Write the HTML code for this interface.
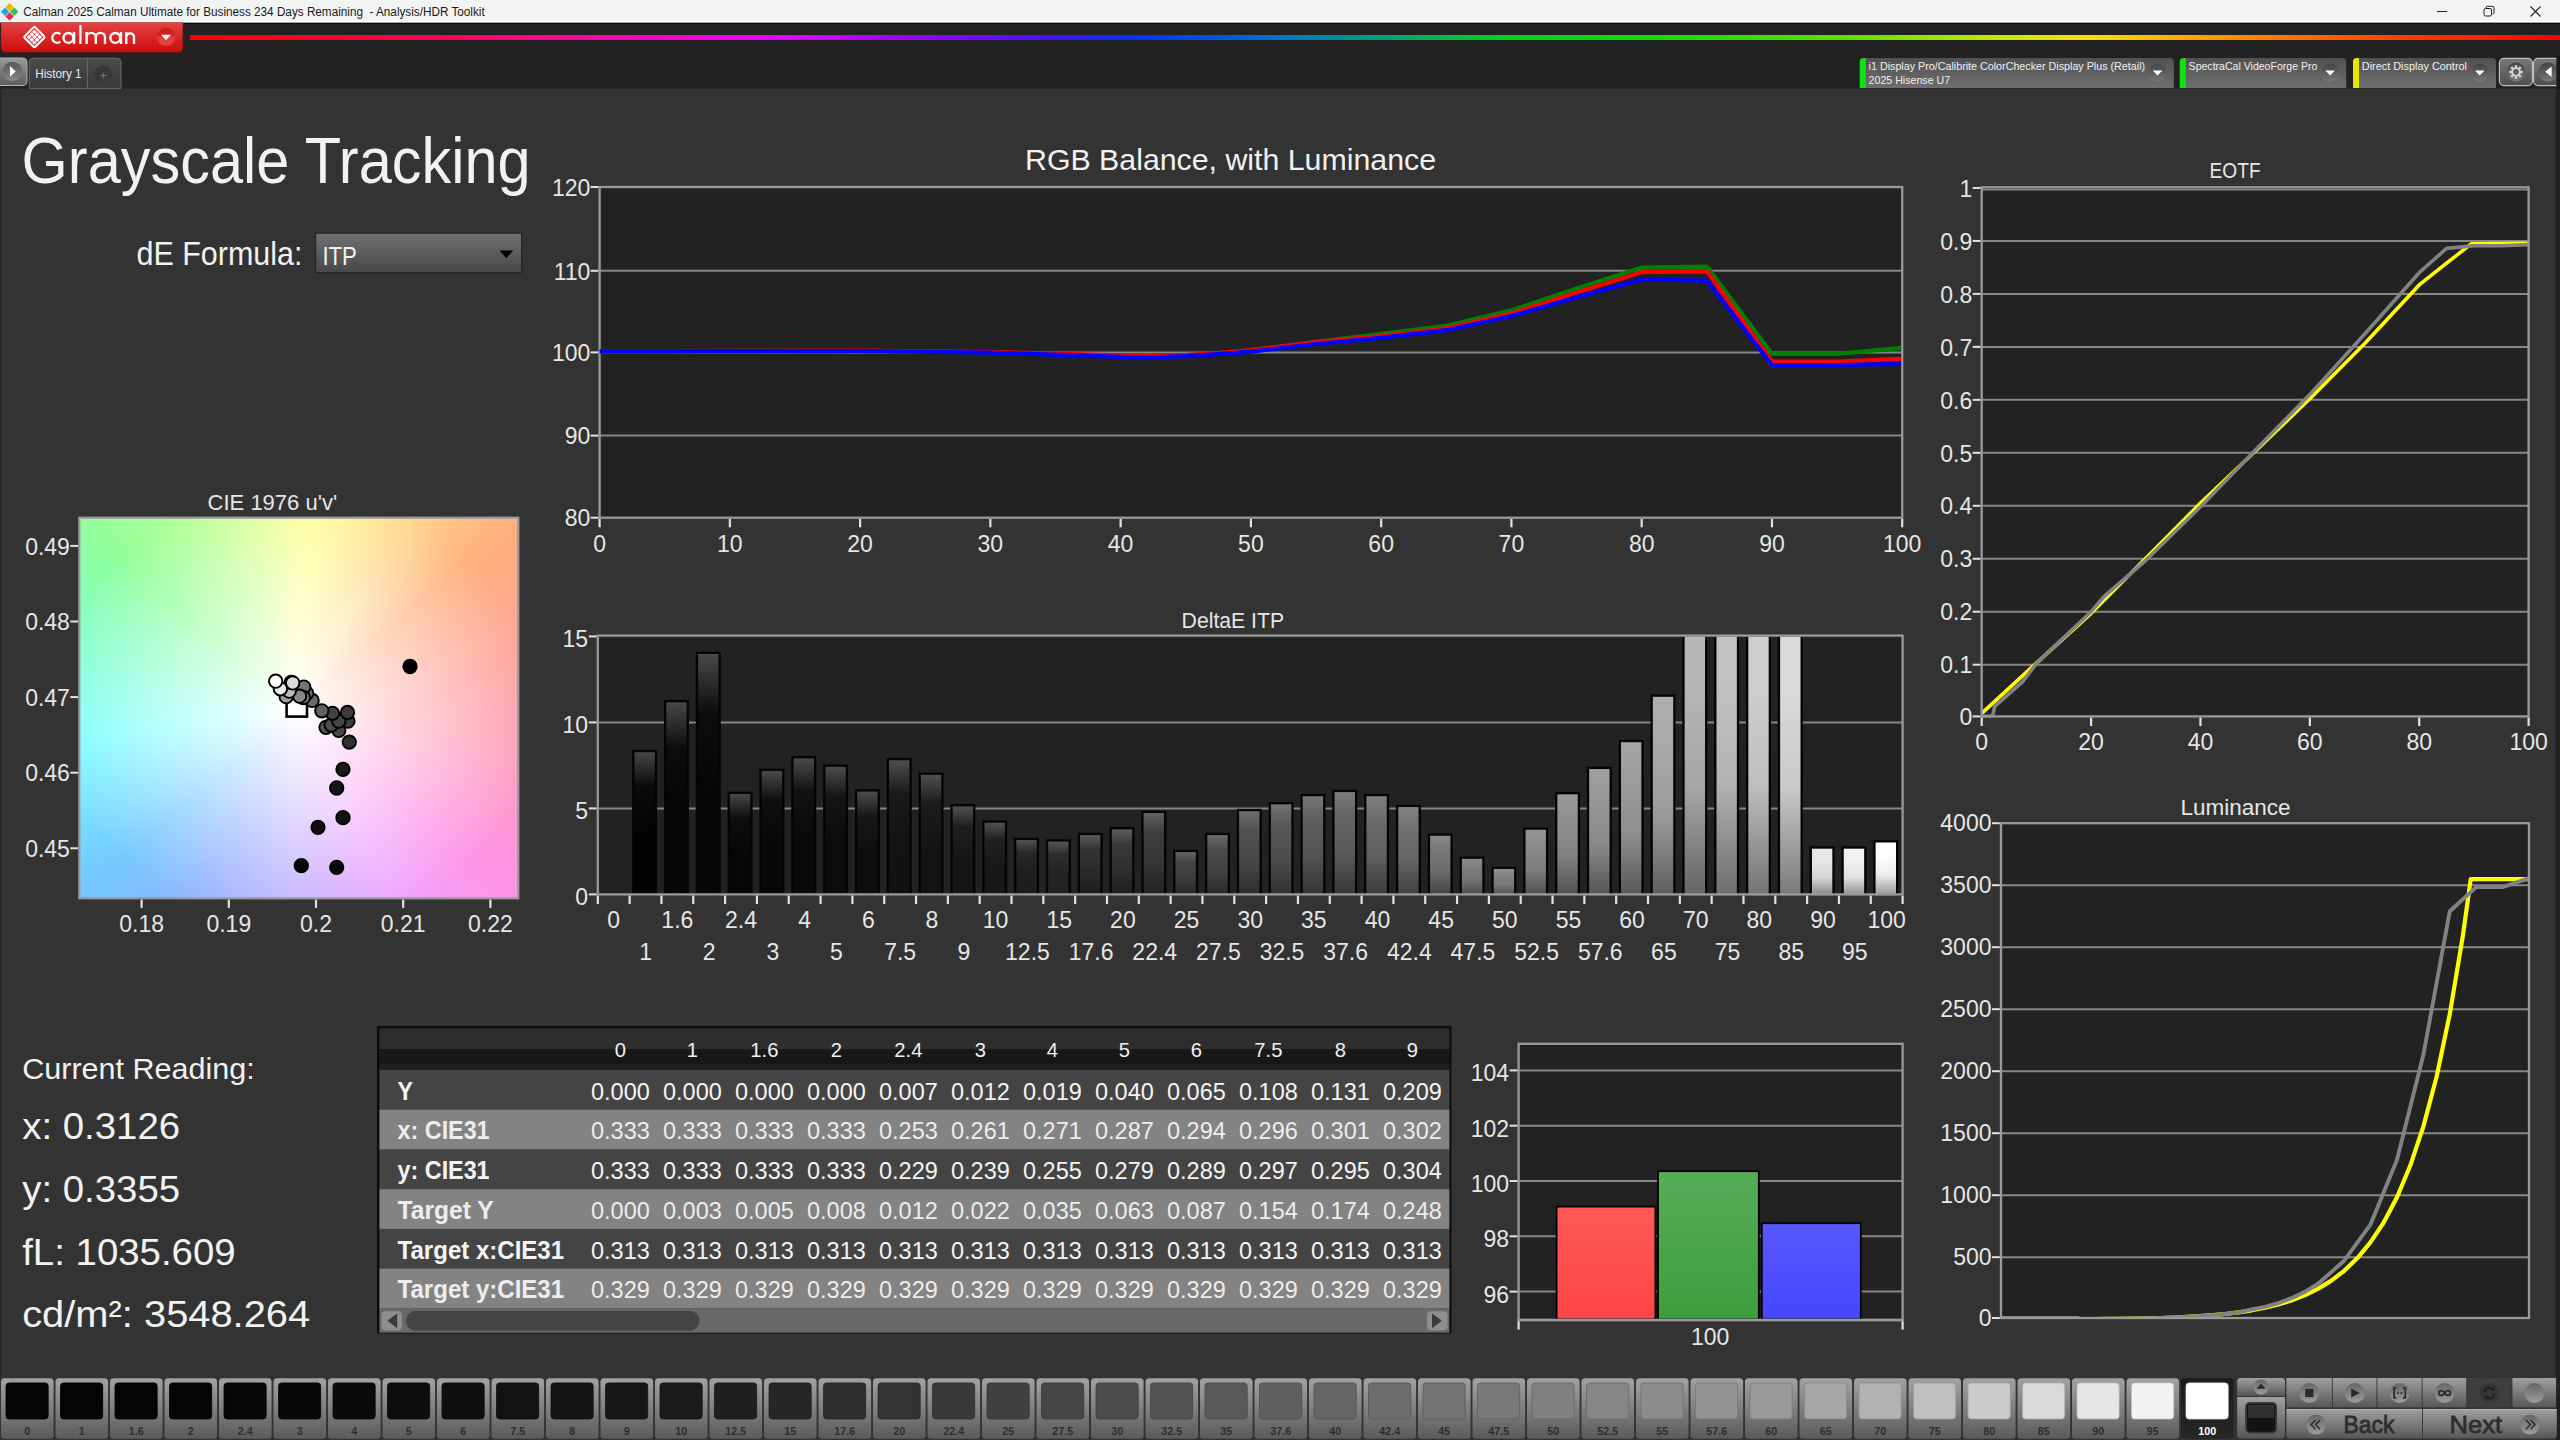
<!DOCTYPE html>
<html><head><meta charset="utf-8"><title>Calman</title>
<style>
html,body{margin:0;padding:0;background:#333;overflow:hidden}
body{width:2560px;height:1440px;position:relative;font-family:"Liberation Sans",sans-serif}
svg{position:absolute;left:0;top:0}
svg text{font-family:"Liberation Sans",sans-serif}
</style></head><body>
<svg width="2560" height="1440" viewBox="0 0 2560 1440">
<defs>
<linearGradient id="gTB" x1="0" y1="0" x2="1" y2="0"><stop offset="0" stop-color="#edf3f1"/><stop offset="0.08" stop-color="#f2f3f3"/><stop offset="1" stop-color="#f3f3f3"/></linearGradient>
<linearGradient id="gRed" x1="0" y1="0" x2="0" y2="1"><stop offset="0" stop-color="#e24444"/><stop offset="0.5" stop-color="#d92626"/><stop offset="1" stop-color="#cb0e0e"/></linearGradient>
<linearGradient id="gRedC" x1="0" y1="0" x2="0" y2="1"><stop offset="0" stop-color="#cf1818"/><stop offset="0.45" stop-color="#d62020"/><stop offset="0.5" stop-color="#e03c3c"/><stop offset="1" stop-color="#e34a4a"/></linearGradient>
<linearGradient id="gRb" x1="0" y1="0" x2="1" y2="0"><stop offset="0" stop-color="#ff0000"/><stop offset="0.10" stop-color="#ff0050"/><stop offset="0.19" stop-color="#ff00c0"/><stop offset="0.24" stop-color="#f000ff"/><stop offset="0.30" stop-color="#a000ff"/><stop offset="0.36" stop-color="#4a10ff"/><stop offset="0.40" stop-color="#0030ff"/><stop offset="0.455" stop-color="#0070d0"/><stop offset="0.50" stop-color="#00a080"/><stop offset="0.55" stop-color="#00d020"/><stop offset="0.62" stop-color="#10e000"/><stop offset="0.70" stop-color="#60e000"/><stop offset="0.76" stop-color="#c0e800"/><stop offset="0.80" stop-color="#f8e000"/><stop offset="0.86" stop-color="#ff9000"/><stop offset="0.93" stop-color="#ff4000"/><stop offset="1" stop-color="#ff0000"/></linearGradient>
<linearGradient id="gBtn" x1="0" y1="0" x2="0" y2="1"><stop offset="0" stop-color="#9a9a9a"/><stop offset="1" stop-color="#5c5c5c"/></linearGradient>
<linearGradient id="gBtnC" x1="0" y1="0" x2="0" y2="1"><stop offset="0" stop-color="#555"/><stop offset="1" stop-color="#8a8a8a"/></linearGradient>
<linearGradient id="gTab" x1="0" y1="0" x2="0" y2="1"><stop offset="0" stop-color="#4c4c4c"/><stop offset="1" stop-color="#383838"/></linearGradient>
<linearGradient id="gDev" x1="0" y1="0" x2="0" y2="1"><stop offset="0" stop-color="#515151"/><stop offset="1" stop-color="#6e6e6e"/></linearGradient>
<linearGradient id="gDevC" x1="0" y1="0" x2="0" y2="1"><stop offset="0" stop-color="#444"/><stop offset="1" stop-color="#777"/></linearGradient>
<linearGradient id="gGear" x1="0" y1="0" x2="0" y2="1"><stop offset="0" stop-color="#7a7a7a"/><stop offset="1" stop-color="#4e4e4e"/></linearGradient>
<linearGradient id="gDD" x1="0" y1="0" x2="0" y2="1"><stop offset="0" stop-color="#707070"/><stop offset="1" stop-color="#484848"/></linearGradient>
<linearGradient id="gb1" x1="0" y1="0" x2="0" y2="1"><stop offset="0" stop-color="#494949"/><stop offset="0.24" stop-color="#0a0a0a"/><stop offset="0.6" stop-color="#020202"/><stop offset="1" stop-color="#020202"/></linearGradient>
<linearGradient id="gb2" x1="0" y1="0" x2="0" y2="1"><stop offset="0" stop-color="#4a4a4a"/><stop offset="0.24" stop-color="#0c0c0c"/><stop offset="0.6" stop-color="#040404"/><stop offset="1" stop-color="#040404"/></linearGradient>
<linearGradient id="gb3" x1="0" y1="0" x2="0" y2="1"><stop offset="0" stop-color="#4a4a4a"/><stop offset="0.24" stop-color="#0d0d0d"/><stop offset="0.6" stop-color="#050505"/><stop offset="1" stop-color="#050505"/></linearGradient>
<linearGradient id="gb4" x1="0" y1="0" x2="0" y2="1"><stop offset="0" stop-color="#4b4b4b"/><stop offset="0.24" stop-color="#0e0e0e"/><stop offset="0.6" stop-color="#060606"/><stop offset="1" stop-color="#060606"/></linearGradient>
<linearGradient id="gb5" x1="0" y1="0" x2="0" y2="1"><stop offset="0" stop-color="#4b4b4b"/><stop offset="0.24" stop-color="#0f0f0f"/><stop offset="0.6" stop-color="#070707"/><stop offset="1" stop-color="#070707"/></linearGradient>
<linearGradient id="gb6" x1="0" y1="0" x2="0" y2="1"><stop offset="0" stop-color="#4d4d4d"/><stop offset="0.24" stop-color="#121212"/><stop offset="0.6" stop-color="#090909"/><stop offset="1" stop-color="#090909"/></linearGradient>
<linearGradient id="gb7" x1="0" y1="0" x2="0" y2="1"><stop offset="0" stop-color="#4e4e4e"/><stop offset="0.24" stop-color="#141414"/><stop offset="0.6" stop-color="#0c0c0c"/><stop offset="1" stop-color="#0b0b0b"/></linearGradient>
<linearGradient id="gb8" x1="0" y1="0" x2="0" y2="1"><stop offset="0" stop-color="#4f4f4f"/><stop offset="0.24" stop-color="#171717"/><stop offset="0.6" stop-color="#0e0e0e"/><stop offset="1" stop-color="#0e0e0e"/></linearGradient>
<linearGradient id="gb9" x1="0" y1="0" x2="0" y2="1"><stop offset="0" stop-color="#515151"/><stop offset="0.24" stop-color="#1b1b1b"/><stop offset="0.6" stop-color="#121212"/><stop offset="1" stop-color="#111111"/></linearGradient>
<linearGradient id="gb10" x1="0" y1="0" x2="0" y2="1"><stop offset="0" stop-color="#515151"/><stop offset="0.24" stop-color="#1c1c1c"/><stop offset="0.6" stop-color="#131313"/><stop offset="1" stop-color="#121212"/></linearGradient>
<linearGradient id="gb11" x1="0" y1="0" x2="0" y2="1"><stop offset="0" stop-color="#535353"/><stop offset="0.24" stop-color="#1e1e1e"/><stop offset="0.6" stop-color="#151515"/><stop offset="1" stop-color="#151515"/></linearGradient>
<linearGradient id="gb12" x1="0" y1="0" x2="0" y2="1"><stop offset="0" stop-color="#545454"/><stop offset="0.24" stop-color="#212121"/><stop offset="0.6" stop-color="#181818"/><stop offset="1" stop-color="#171717"/></linearGradient>
<linearGradient id="gb13" x1="0" y1="0" x2="0" y2="1"><stop offset="0" stop-color="#575757"/><stop offset="0.24" stop-color="#272727"/><stop offset="0.6" stop-color="#1e1e1e"/><stop offset="1" stop-color="#1d1d1d"/></linearGradient>
<linearGradient id="gb14" x1="0" y1="0" x2="0" y2="1"><stop offset="0" stop-color="#5a5a5a"/><stop offset="0.24" stop-color="#2d2d2d"/><stop offset="0.6" stop-color="#242424"/><stop offset="1" stop-color="#222222"/></linearGradient>
<linearGradient id="gb15" x1="0" y1="0" x2="0" y2="1"><stop offset="0" stop-color="#5e5e5e"/><stop offset="0.24" stop-color="#333333"/><stop offset="0.6" stop-color="#2a2a2a"/><stop offset="1" stop-color="#191919"/></linearGradient>
<linearGradient id="gb16" x1="0" y1="0" x2="0" y2="1"><stop offset="0" stop-color="#616161"/><stop offset="0.24" stop-color="#393939"/><stop offset="0.6" stop-color="#2f2f2f"/><stop offset="1" stop-color="#1d1d1d"/></linearGradient>
<linearGradient id="gb17" x1="0" y1="0" x2="0" y2="1"><stop offset="0" stop-color="#646464"/><stop offset="0.24" stop-color="#3f3f3f"/><stop offset="0.6" stop-color="#353535"/><stop offset="1" stop-color="#202020"/></linearGradient>
<linearGradient id="gb18" x1="0" y1="0" x2="0" y2="1"><stop offset="0" stop-color="#686868"/><stop offset="0.24" stop-color="#464646"/><stop offset="0.6" stop-color="#3b3b3b"/><stop offset="1" stop-color="#242424"/></linearGradient>
<linearGradient id="gb19" x1="0" y1="0" x2="0" y2="1"><stop offset="0" stop-color="#6c6c6c"/><stop offset="0.24" stop-color="#4c4c4c"/><stop offset="0.6" stop-color="#414141"/><stop offset="1" stop-color="#272727"/></linearGradient>
<linearGradient id="gb20" x1="0" y1="0" x2="0" y2="1"><stop offset="0" stop-color="#707070"/><stop offset="0.24" stop-color="#525252"/><stop offset="0.6" stop-color="#474747"/><stop offset="1" stop-color="#2b2b2b"/></linearGradient>
<linearGradient id="gb21" x1="0" y1="0" x2="0" y2="1"><stop offset="0" stop-color="#747474"/><stop offset="0.24" stop-color="#585858"/><stop offset="0.6" stop-color="#4d4d4d"/><stop offset="1" stop-color="#2e2e2e"/></linearGradient>
<linearGradient id="gb22" x1="0" y1="0" x2="0" y2="1"><stop offset="0" stop-color="#787878"/><stop offset="0.24" stop-color="#5e5e5e"/><stop offset="0.6" stop-color="#535353"/><stop offset="1" stop-color="#323232"/></linearGradient>
<linearGradient id="gb23" x1="0" y1="0" x2="0" y2="1"><stop offset="0" stop-color="#7c7c7c"/><stop offset="0.24" stop-color="#656565"/><stop offset="0.6" stop-color="#595959"/><stop offset="1" stop-color="#363636"/></linearGradient>
<linearGradient id="gb24" x1="0" y1="0" x2="0" y2="1"><stop offset="0" stop-color="#808080"/><stop offset="0.24" stop-color="#6b6b6b"/><stop offset="0.6" stop-color="#5f5f5f"/><stop offset="1" stop-color="#393939"/></linearGradient>
<linearGradient id="gb25" x1="0" y1="0" x2="0" y2="1"><stop offset="0" stop-color="#848484"/><stop offset="0.24" stop-color="#717171"/><stop offset="0.6" stop-color="#656565"/><stop offset="1" stop-color="#3d3d3d"/></linearGradient>
<linearGradient id="gb26" x1="0" y1="0" x2="0" y2="1"><stop offset="0" stop-color="#898989"/><stop offset="0.24" stop-color="#777777"/><stop offset="0.6" stop-color="#6b6b6b"/><stop offset="1" stop-color="#404040"/></linearGradient>
<linearGradient id="gb27" x1="0" y1="0" x2="0" y2="1"><stop offset="0" stop-color="#8d8d8d"/><stop offset="0.24" stop-color="#7d7d7d"/><stop offset="0.6" stop-color="#717171"/><stop offset="1" stop-color="#444444"/></linearGradient>
<linearGradient id="gb28" x1="0" y1="0" x2="0" y2="1"><stop offset="0" stop-color="#929292"/><stop offset="0.24" stop-color="#848484"/><stop offset="0.6" stop-color="#777777"/><stop offset="1" stop-color="#474747"/></linearGradient>
<linearGradient id="gb29" x1="0" y1="0" x2="0" y2="1"><stop offset="0" stop-color="#969696"/><stop offset="0.24" stop-color="#8a8a8a"/><stop offset="0.6" stop-color="#7d7d7d"/><stop offset="1" stop-color="#4b4b4b"/></linearGradient>
<linearGradient id="gb30" x1="0" y1="0" x2="0" y2="1"><stop offset="0" stop-color="#9b9b9b"/><stop offset="0.24" stop-color="#909090"/><stop offset="0.6" stop-color="#828282"/><stop offset="1" stop-color="#4f4f4f"/></linearGradient>
<linearGradient id="gb31" x1="0" y1="0" x2="0" y2="1"><stop offset="0" stop-color="#a0a0a0"/><stop offset="0.24" stop-color="#969696"/><stop offset="0.6" stop-color="#898989"/><stop offset="1" stop-color="#525252"/></linearGradient>
<linearGradient id="gb32" x1="0" y1="0" x2="0" y2="1"><stop offset="0" stop-color="#a5a5a5"/><stop offset="0.24" stop-color="#9c9c9c"/><stop offset="0.6" stop-color="#8e8e8e"/><stop offset="1" stop-color="#565656"/></linearGradient>
<linearGradient id="gb33" x1="0" y1="0" x2="0" y2="1"><stop offset="0" stop-color="#afafaf"/><stop offset="0.24" stop-color="#a9a9a9"/><stop offset="0.6" stop-color="#9a9a9a"/><stop offset="1" stop-color="#5d5d5d"/></linearGradient>
<linearGradient id="gb34" x1="0" y1="0" x2="0" y2="1"><stop offset="0" stop-color="#b9b9b9"/><stop offset="0.24" stop-color="#b5b5b5"/><stop offset="0.6" stop-color="#a6a6a6"/><stop offset="1" stop-color="#646464"/></linearGradient>
<linearGradient id="gb35" x1="0" y1="0" x2="0" y2="1"><stop offset="0" stop-color="#c4c4c4"/><stop offset="0.24" stop-color="#c1c1c1"/><stop offset="0.6" stop-color="#b2b2b2"/><stop offset="1" stop-color="#6b6b6b"/></linearGradient>
<linearGradient id="gb36" x1="0" y1="0" x2="0" y2="1"><stop offset="0" stop-color="#cfcfcf"/><stop offset="0.24" stop-color="#cecece"/><stop offset="0.6" stop-color="#bebebe"/><stop offset="1" stop-color="#727272"/></linearGradient>
<linearGradient id="gb37" x1="0" y1="0" x2="0" y2="1"><stop offset="0" stop-color="#dadada"/><stop offset="0.24" stop-color="#dadada"/><stop offset="0.6" stop-color="#cacaca"/><stop offset="1" stop-color="#797979"/></linearGradient>
<linearGradient id="gb38" x1="0" y1="0" x2="0" y2="1"><stop offset="0" stop-color="#e6e6e6"/><stop offset="0.24" stop-color="#e6e6e6"/><stop offset="0.6" stop-color="#d5d5d5"/><stop offset="1" stop-color="#818181"/></linearGradient>
<linearGradient id="gb39" x1="0" y1="0" x2="0" y2="1"><stop offset="0" stop-color="#f2f2f2"/><stop offset="0.24" stop-color="#f3f3f3"/><stop offset="0.6" stop-color="#e1e1e1"/><stop offset="1" stop-color="#888888"/></linearGradient>
<linearGradient id="gb40" x1="0" y1="0" x2="0" y2="1"><stop offset="0" stop-color="#ffffff"/><stop offset="0.24" stop-color="#ffffff"/><stop offset="0.6" stop-color="#ededed"/><stop offset="1" stop-color="#8f8f8f"/></linearGradient>
<linearGradient id="gB0" x1="0" y1="0" x2="0" y2="1"><stop offset="0" stop-color="#ff5858"/><stop offset="1" stop-color="#ff4646"/></linearGradient>
<linearGradient id="gB1" x1="0" y1="0" x2="0" y2="1"><stop offset="0" stop-color="#58ac58"/><stop offset="1" stop-color="#3c9e3c"/></linearGradient>
<linearGradient id="gB2" x1="0" y1="0" x2="0" y2="1"><stop offset="0" stop-color="#5858ff"/><stop offset="1" stop-color="#4646ff"/></linearGradient>
<linearGradient id="gTH" x1="0" y1="0" x2="0" y2="1"><stop offset="0" stop-color="#2c2c2c"/><stop offset="0.5" stop-color="#2e2e2e"/><stop offset="0.5" stop-color="#191919"/><stop offset="0.86" stop-color="#161616"/><stop offset="0.86" stop-color="#202020"/><stop offset="1" stop-color="#202020"/></linearGradient>
<linearGradient id="gTile" x1="0" y1="0" x2="0" y2="1"><stop offset="0" stop-color="#a2a2a2"/><stop offset="0.55" stop-color="#7c7c7c"/><stop offset="1" stop-color="#5a5a5a"/></linearGradient>
<linearGradient id="gTileS" x1="0" y1="0" x2="0" y2="1"><stop offset="0" stop-color="#1c1c1c"/><stop offset="1" stop-color="#262626"/></linearGradient>
<linearGradient id="gCt" x1="0" y1="0" x2="0" y2="1"><stop offset="0" stop-color="#a0a0a0"/><stop offset="1" stop-color="#565656"/></linearGradient>
<linearGradient id="gCtC" x1="0" y1="0" x2="0" y2="1"><stop offset="0" stop-color="#666"/><stop offset="1" stop-color="#9c9c9c"/></linearGradient>
</defs>
<rect x="0.00" y="0.00" width="2560.00" height="1440.00" fill="#333333" />
<rect x="0.00" y="0.00" width="2560.00" height="22.80" fill="url(#gTB)" />
<rect x="0.00" y="20.70" width="2560.00" height="2.10" fill="#ffffff" />
<rect x="0.00" y="22.80" width="2560.00" height="65.80" fill="#222222" />
<rect x="184.00" y="22.80" width="2376.00" height="1.20" fill="#0c0c0c" />
<rect x="0.00" y="88.60" width="1.20" height="1290.00" fill="#262626" />
<g transform="translate(9.6,11.6)"><path d="M0,-8.6 L4.2,-4.4 L0,-0.2 L-4.2,-4.4Z" fill="#f5b800"/><path d="M-4.6,-4 L-0.4,0.2 L-4.6,4.4 L-8.8,0.2Z" fill="#22a7f0"/><path d="M4.6,-4 L8.8,0.2 L4.6,4.4 L0.4,0.2Z" fill="#3cc13c"/><path d="M0,0.6 L4.2,4.8 L0,9 L-4.2,4.8Z" fill="#ee2255"/></g>
<text x="23.20" y="15.60" font-size="12.00" fill="#1a1a1a" textLength="461.50" lengthAdjust="spacingAndGlyphs" >Calman 2025 Calman Ultimate for Business 234 Days Remaining  - Analysis/HDR Toolkit</text>
<line x1="2437.00" y1="11.50" x2="2447.00" y2="11.50" stroke="#222" stroke-width="1" />
<rect x="2484" y="8.5" width="7.5" height="7.5" rx="1.5" fill="none" stroke="#222" stroke-width="1"/>
<path d="M2486,8.5 V7.8 Q2486,6.3 2487.5,6.3 H2492.3 Q2494,6.3 2494,8 V12.8 Q2494,14 2492.5,14" fill="none" stroke="#222" stroke-width="1"/>
<path d="M2530.5,6.5 L2540.5,16.5 M2540.5,6.5 L2530.5,16.5" stroke="#222" stroke-width="1.1" fill="none"/>
<path d="M0.6,22.6 H183.4 V48 Q183.4,53 178.4,53 H5.6 Q0.6,53 0.6,48 Z" fill="#5a1a14"/>
<path d="M1.2,22.6 H182.6 V47.4 Q182.6,52 178,52 H5.8 Q1.2,52 1.2,47.4 Z" fill="url(#gRed)"/>
<g transform="translate(34.4,37.1) rotate(45)" fill="none" stroke="#fff" stroke-width="2.1"><rect x="-7.5" y="-7.5" width="15" height="15" rx="1.6"/></g>
<g transform="translate(34.4,37.1) rotate(45)" fill="#fff"><rect x="-5.45" y="-5.45" width="3.3" height="3.3" rx="0.7"/><rect x="-5.45" y="-1.65" width="3.3" height="3.3" rx="0.7"/><rect x="-5.45" y="2.15" width="3.3" height="3.3" rx="0.7"/><rect x="-1.65" y="-5.45" width="3.3" height="3.3" rx="0.7"/><rect x="-1.65" y="-1.65" width="3.3" height="3.3" rx="0.7"/><rect x="-1.65" y="2.15" width="3.3" height="3.3" rx="0.7"/><rect x="2.15" y="-5.45" width="3.3" height="3.3" rx="0.7"/><rect x="2.15" y="-1.65" width="3.3" height="3.3" rx="0.7"/><rect x="2.15" y="2.15" width="3.3" height="3.3" rx="0.7"/></g>
<g fill="none" stroke="#fff" stroke-width="2.35" stroke-linecap="butt"><path d="M60.3,34.1 A4.9,4.9 0 1 0 60.3,41.7"/><circle cx="68.4" cy="37.9" r="4.9"/><path d="M74.1,31.9 V43.9"/><path d="M80.4,25 V43.9"/><path d="M86.6,43.9 V31.9 M86.6,37.4 A4.6,4.6 0 0 1 95.8,37.4 V43.9 M95.8,37.4 A4.6,4.6 0 0 1 105,37.4 V43.9"/><circle cx="115.3" cy="37.9" r="4.9"/><path d="M121,31.9 V43.9"/><path d="M126.2,43.9 V31.9 M126.2,37.2 A3.9,3.9 0 0 1 134,37.2 V43.9"/></g>
<circle cx="166" cy="36.8" r="9" fill="url(#gRedC)"/>
<path d="M161,34.8 H171 L166,40Z" fill="#fff"/>
<rect x="189.80" y="35.00" width="2371.00" height="5.00" fill="url(#gRb)" />
<path d="M-2,58 H22.5 Q27,58 27,62.5 V81 Q27,85.5 22.5,85.5 H-2Z" fill="url(#gBtn)" stroke="#b4b4b4" stroke-width="1"/>
<circle cx="12.4" cy="71.4" r="9.6" fill="url(#gBtnC)"/>
<path d="M10,66 L15.6,71.4 L10,76.8Z" fill="#fff"/>
<path d="M29.3,88.4 V62 Q29.3,58.2 33,58.2 H117.2 Q121,58.2 121,62 V88.4Z" fill="url(#gTab)" stroke="#6a6a6a" stroke-width="1"/>
<line x1="87.40" y1="59.00" x2="87.40" y2="88.00" stroke="#6a6a6a" stroke-width="1" />
<text x="35.20" y="78.40" font-size="12.20" fill="#e8e8e8" textLength="46.40" lengthAdjust="spacingAndGlyphs" >History 1</text>
<circle cx="103.2" cy="74.2" r="9" fill="#383838"/>
<path d="M100.2,75.5 H106.2 M103.2,72.5 V78.5" stroke="#7c7c7c" stroke-width="1" fill="none"/>
<path d="M1859.8,88 V62 Q1859.8,58 1863.8,58 H2169.8 Q2173.8,58 2173.8,62 V88Z" fill="url(#gDev)"/>
<path d="M1859.8,88 V62 Q1859.8,58 1863.8,58 H1865.8 V88Z" fill="#12e212"/>
<circle cx="2157.6" cy="72.8" r="9.2" fill="url(#gDevC)"/>
<path d="M2152.8,70.6 H2162.4 L2157.6,75.6Z" fill="#fff"/>
<text x="1868.60" y="69.80" font-size="11.30" fill="#f0f0f0" textLength="276.50" lengthAdjust="spacingAndGlyphs" >i1 Display Pro/Calibrite ColorChecker Display Plus (Retail)</text>
<text x="1868.60" y="84.20" font-size="11.30" fill="#f0f0f0" textLength="81.50" lengthAdjust="spacingAndGlyphs" >2025 Hisense U7</text>
<path d="M2179.8,88 V62 Q2179.8,58 2183.8,58 H2342.2 Q2346.2,58 2346.2,62 V88Z" fill="url(#gDev)"/>
<path d="M2179.8,88 V62 Q2179.8,58 2183.8,58 H2185.8 V88Z" fill="#12e212"/>
<circle cx="2330.2" cy="72.8" r="9.2" fill="url(#gDevC)"/>
<path d="M2325.4,70.6 H2335.0 L2330.2,75.6Z" fill="#fff"/>
<text x="2188.60" y="69.80" font-size="11.30" fill="#f0f0f0" textLength="128.80" lengthAdjust="spacingAndGlyphs" >SpectraCal VideoForge Pro</text>
<path d="M2353.0,88 V62 Q2353.0,58 2357.0,58 H2492.0 Q2496.0,58 2496.0,62 V88Z" fill="url(#gDev)"/>
<path d="M2353.0,88 V62 Q2353.0,58 2357.0,58 H2359.0 V88Z" fill="#e6e600"/>
<circle cx="2479.7" cy="72.8" r="9.2" fill="url(#gDevC)"/>
<path d="M2474.9,70.6 H2484.5 L2479.7,75.6Z" fill="#fff"/>
<text x="2361.80" y="69.80" font-size="11.30" fill="#f0f0f0" textLength="105.20" lengthAdjust="spacingAndGlyphs" >Direct Display Control</text>
<rect x="2499.4" y="58.4" width="33" height="27.2" rx="4.5" fill="url(#gGear)" stroke="#bcbcbc" stroke-width="1.2"/>
<rect x="2533.6" y="58.4" width="33" height="27.2" rx="4.5" fill="url(#gGear)" stroke="#bcbcbc" stroke-width="1.2"/>
<circle cx="2516" cy="72" r="9.4" fill="url(#gDevC)"/>
<circle cx="2548" cy="72" r="9.4" fill="url(#gDevC)"/>
<g transform="translate(2516,72)"><rect x="-1.3" y="-6.8" width="2.6" height="3" fill="#d2d2d2" transform="rotate(0)"/><rect x="-1.3" y="-6.8" width="2.6" height="3" fill="#d2d2d2" transform="rotate(45)"/><rect x="-1.3" y="-6.8" width="2.6" height="3" fill="#d2d2d2" transform="rotate(90)"/><rect x="-1.3" y="-6.8" width="2.6" height="3" fill="#d2d2d2" transform="rotate(135)"/><rect x="-1.3" y="-6.8" width="2.6" height="3" fill="#d2d2d2" transform="rotate(180)"/><rect x="-1.3" y="-6.8" width="2.6" height="3" fill="#d2d2d2" transform="rotate(225)"/><rect x="-1.3" y="-6.8" width="2.6" height="3" fill="#d2d2d2" transform="rotate(270)"/><rect x="-1.3" y="-6.8" width="2.6" height="3" fill="#d2d2d2" transform="rotate(315)"/><circle r="3.8" fill="none" stroke="#d2d2d2" stroke-width="1.8"/></g>
<path d="M2551.6,66.6 L2545.2,71.8 L2551.6,77Z" fill="#fff"/>
<rect x="2556.40" y="56.00" width="3.60" height="33.00" fill="#1a1a1a" />
<rect x="2555.80" y="88.60" width="4.20" height="1352.00" fill="#202020" />
<text x="21.60" y="182.50" font-size="65.40" fill="#f2f2f2" textLength="509.00" lengthAdjust="spacingAndGlyphs" >Grayscale Tracking</text>
<text x="136.50" y="264.60" font-size="32.70" fill="#f2f2f2" textLength="166.00" lengthAdjust="spacingAndGlyphs" >dE Formula:</text>
<rect x="315.6" y="233.2" width="206" height="39.4" fill="url(#gDD)" stroke="#262626" stroke-width="1.2"/>
<text x="322.40" y="265.10" font-size="26.00" fill="#f2f2f2" textLength="34.50" lengthAdjust="spacingAndGlyphs" >ITP</text>
<path d="M499.6,250.4 H513.2 L506.4,258.2Z" fill="#000"/>
<text x="1025.00" y="170.00" font-size="29.00" fill="#f2f2f2" textLength="411.00" lengthAdjust="spacingAndGlyphs" >RGB Balance, with Luminance</text>
<rect x="599.60" y="187.00" width="1302.60" height="330.70" fill="#222222" />
<line x1="599.60" y1="435.60" x2="1902.20" y2="435.60" stroke="#868686" stroke-width="2" />
<line x1="599.60" y1="352.40" x2="1902.20" y2="352.40" stroke="#868686" stroke-width="2" />
<line x1="599.60" y1="270.80" x2="1902.20" y2="270.80" stroke="#868686" stroke-width="2" />
<rect x="599.60" y="187.00" width="1302.60" height="330.70" fill="none" stroke="#9a9a9a" stroke-width="2.3"/>
<line x1="590.60" y1="517.70" x2="598.40" y2="517.70" stroke="#e2e2e2" stroke-width="2" />
<text x="590.30" y="526.40" font-size="23.00" fill="#e6e6e6" text-anchor="end" >80</text>
<line x1="590.60" y1="435.60" x2="598.40" y2="435.60" stroke="#e2e2e2" stroke-width="2" />
<text x="590.30" y="444.30" font-size="23.00" fill="#e6e6e6" text-anchor="end" >90</text>
<line x1="590.60" y1="352.40" x2="598.40" y2="352.40" stroke="#e2e2e2" stroke-width="2" />
<text x="590.30" y="361.10" font-size="23.00" fill="#e6e6e6" text-anchor="end" >100</text>
<line x1="590.60" y1="270.80" x2="598.40" y2="270.80" stroke="#e2e2e2" stroke-width="2" />
<text x="590.30" y="279.50" font-size="23.00" fill="#e6e6e6" text-anchor="end" >110</text>
<line x1="590.60" y1="187.00" x2="598.40" y2="187.00" stroke="#e2e2e2" stroke-width="2" />
<text x="590.30" y="195.70" font-size="23.00" fill="#e6e6e6" text-anchor="end" >120</text>
<line x1="599.60" y1="518.90" x2="599.60" y2="527.30" stroke="#e2e2e2" stroke-width="2.2" />
<text x="599.60" y="551.80" font-size="23.00" fill="#e6e6e6" text-anchor="middle" >0</text>
<line x1="729.86" y1="518.90" x2="729.86" y2="527.30" stroke="#e2e2e2" stroke-width="2.2" />
<text x="729.86" y="551.80" font-size="23.00" fill="#e6e6e6" text-anchor="middle" >10</text>
<line x1="860.12" y1="518.90" x2="860.12" y2="527.30" stroke="#e2e2e2" stroke-width="2.2" />
<text x="860.12" y="551.80" font-size="23.00" fill="#e6e6e6" text-anchor="middle" >20</text>
<line x1="990.38" y1="518.90" x2="990.38" y2="527.30" stroke="#e2e2e2" stroke-width="2.2" />
<text x="990.38" y="551.80" font-size="23.00" fill="#e6e6e6" text-anchor="middle" >30</text>
<line x1="1120.64" y1="518.90" x2="1120.64" y2="527.30" stroke="#e2e2e2" stroke-width="2.2" />
<text x="1120.64" y="551.80" font-size="23.00" fill="#e6e6e6" text-anchor="middle" >40</text>
<line x1="1250.90" y1="518.90" x2="1250.90" y2="527.30" stroke="#e2e2e2" stroke-width="2.2" />
<text x="1250.90" y="551.80" font-size="23.00" fill="#e6e6e6" text-anchor="middle" >50</text>
<line x1="1381.16" y1="518.90" x2="1381.16" y2="527.30" stroke="#e2e2e2" stroke-width="2.2" />
<text x="1381.16" y="551.80" font-size="23.00" fill="#e6e6e6" text-anchor="middle" >60</text>
<line x1="1511.42" y1="518.90" x2="1511.42" y2="527.30" stroke="#e2e2e2" stroke-width="2.2" />
<text x="1511.42" y="551.80" font-size="23.00" fill="#e6e6e6" text-anchor="middle" >70</text>
<line x1="1641.68" y1="518.90" x2="1641.68" y2="527.30" stroke="#e2e2e2" stroke-width="2.2" />
<text x="1641.68" y="551.80" font-size="23.00" fill="#e6e6e6" text-anchor="middle" >80</text>
<line x1="1771.94" y1="518.90" x2="1771.94" y2="527.30" stroke="#e2e2e2" stroke-width="2.2" />
<text x="1771.94" y="551.80" font-size="23.00" fill="#e6e6e6" text-anchor="middle" >90</text>
<line x1="1902.20" y1="518.90" x2="1902.20" y2="527.30" stroke="#e2e2e2" stroke-width="2.2" />
<text x="1902.20" y="551.80" font-size="23.00" fill="#e6e6e6" text-anchor="middle" >100</text>
<clipPath id="cRGB"><rect x="599.6" y="187.0" width="1301.6" height="330.7"/></clipPath>
<polyline points="599.6,351.2 860.1,350.8 990.4,352.4 1120.6,356.0 1151.9,356.6 1185.8,355.2 1218.3,353.0 1250.9,350.4 1316.0,341.8 1381.2,333.8 1446.3,325.8 1511.4,310.4 1576.6,288.6 1641.7,267.5 1706.8,266.6 1771.9,353.8 1837.1,353.8 1902.2,347.8" fill="none" stroke="#008000" stroke-width="4.2" stroke-linejoin="round" clip-path="url(#cRGB)"/>
<polyline points="599.6,351.2 860.1,350.6 990.4,352.0 1120.6,355.4 1151.9,356.2 1185.8,355.0 1218.3,353.0 1250.9,350.2 1316.0,342.2 1381.2,336.2 1446.3,328.4 1511.4,313.6 1576.6,292.6 1641.7,272.2 1706.8,271.3 1771.9,361.6 1837.1,361.6 1902.2,358.8" fill="none" stroke="#ff0000" stroke-width="4.2" stroke-linejoin="round" clip-path="url(#cRGB)"/>
<polyline points="599.6,351.4 860.1,351.0 990.4,352.6 1120.6,356.8 1151.9,357.4 1185.8,356.2 1218.3,354.2 1250.9,351.6 1316.0,344.0 1381.2,337.8 1446.3,330.2 1511.4,316.0 1576.6,297.2 1641.7,279.4 1706.8,280.6 1771.9,365.0 1837.1,365.0 1902.2,363.8" fill="none" stroke="#0000ff" stroke-width="4.2" stroke-linejoin="round" clip-path="url(#cRGB)"/>
<text x="1181.60" y="627.60" font-size="22.00" fill="#e6e6e6" textLength="102.50" lengthAdjust="spacingAndGlyphs" >DeltaE ITP</text>
<rect x="597.80" y="635.60" width="1304.80" height="258.80" fill="#222222" />
<line x1="597.80" y1="808.40" x2="1902.60" y2="808.40" stroke="#868686" stroke-width="2" />
<line x1="597.80" y1="722.40" x2="1902.60" y2="722.40" stroke="#868686" stroke-width="2" />
<clipPath id="cDE"><rect x="597.8" y="636.4" width="1304.8" height="258.8"/></clipPath>
<rect x="633.29" y="751.04" width="22.70" height="145.96" fill="url(#gb1)" stroke="#040404" stroke-width="2.3" clip-path="url(#cDE)"/>
<rect x="665.11" y="701.16" width="22.70" height="195.84" fill="url(#gb2)" stroke="#040404" stroke-width="2.3" clip-path="url(#cDE)"/>
<rect x="696.94" y="652.82" width="22.70" height="244.18" fill="url(#gb3)" stroke="#040404" stroke-width="2.3" clip-path="url(#cDE)"/>
<rect x="728.76" y="792.83" width="22.70" height="104.17" fill="url(#gb4)" stroke="#040404" stroke-width="2.3" clip-path="url(#cDE)"/>
<rect x="760.58" y="769.78" width="22.70" height="127.22" fill="url(#gb5)" stroke="#040404" stroke-width="2.3" clip-path="url(#cDE)"/>
<rect x="792.41" y="757.23" width="22.70" height="139.77" fill="url(#gb6)" stroke="#040404" stroke-width="2.3" clip-path="url(#cDE)"/>
<rect x="824.23" y="765.66" width="22.70" height="131.34" fill="url(#gb7)" stroke="#040404" stroke-width="2.3" clip-path="url(#cDE)"/>
<rect x="856.06" y="790.42" width="22.70" height="106.58" fill="url(#gb8)" stroke="#040404" stroke-width="2.3" clip-path="url(#cDE)"/>
<rect x="887.88" y="759.12" width="22.70" height="137.88" fill="url(#gb9)" stroke="#040404" stroke-width="2.3" clip-path="url(#cDE)"/>
<rect x="919.71" y="773.74" width="22.70" height="123.26" fill="url(#gb10)" stroke="#040404" stroke-width="2.3" clip-path="url(#cDE)"/>
<rect x="951.53" y="805.22" width="22.70" height="91.78" fill="url(#gb11)" stroke="#040404" stroke-width="2.3" clip-path="url(#cDE)"/>
<rect x="983.35" y="821.56" width="22.70" height="75.44" fill="url(#gb12)" stroke="#040404" stroke-width="2.3" clip-path="url(#cDE)"/>
<rect x="1015.18" y="838.93" width="22.70" height="58.07" fill="url(#gb13)" stroke="#040404" stroke-width="2.3" clip-path="url(#cDE)"/>
<rect x="1047.00" y="840.48" width="22.70" height="56.52" fill="url(#gb14)" stroke="#040404" stroke-width="2.3" clip-path="url(#cDE)"/>
<rect x="1078.83" y="833.94" width="22.70" height="63.06" fill="url(#gb15)" stroke="#040404" stroke-width="2.3" clip-path="url(#cDE)"/>
<rect x="1110.65" y="828.26" width="22.70" height="68.74" fill="url(#gb16)" stroke="#040404" stroke-width="2.3" clip-path="url(#cDE)"/>
<rect x="1142.48" y="811.92" width="22.70" height="85.08" fill="url(#gb17)" stroke="#040404" stroke-width="2.3" clip-path="url(#cDE)"/>
<rect x="1174.30" y="850.97" width="22.70" height="46.03" fill="url(#gb18)" stroke="#040404" stroke-width="2.3" clip-path="url(#cDE)"/>
<rect x="1206.13" y="833.94" width="22.70" height="63.06" fill="url(#gb19)" stroke="#040404" stroke-width="2.3" clip-path="url(#cDE)"/>
<rect x="1237.95" y="810.03" width="22.70" height="86.97" fill="url(#gb20)" stroke="#040404" stroke-width="2.3" clip-path="url(#cDE)"/>
<rect x="1269.77" y="803.15" width="22.70" height="93.85" fill="url(#gb21)" stroke="#040404" stroke-width="2.3" clip-path="url(#cDE)"/>
<rect x="1301.60" y="795.07" width="22.70" height="101.93" fill="url(#gb22)" stroke="#040404" stroke-width="2.3" clip-path="url(#cDE)"/>
<rect x="1333.42" y="790.94" width="22.70" height="106.06" fill="url(#gb23)" stroke="#040404" stroke-width="2.3" clip-path="url(#cDE)"/>
<rect x="1365.25" y="795.07" width="22.70" height="101.93" fill="url(#gb24)" stroke="#040404" stroke-width="2.3" clip-path="url(#cDE)"/>
<rect x="1397.07" y="805.90" width="22.70" height="91.10" fill="url(#gb25)" stroke="#040404" stroke-width="2.3" clip-path="url(#cDE)"/>
<rect x="1428.90" y="834.63" width="22.70" height="62.37" fill="url(#gb26)" stroke="#040404" stroke-width="2.3" clip-path="url(#cDE)"/>
<rect x="1460.72" y="857.68" width="22.70" height="39.32" fill="url(#gb27)" stroke="#040404" stroke-width="2.3" clip-path="url(#cDE)"/>
<rect x="1492.55" y="867.82" width="22.70" height="29.18" fill="url(#gb28)" stroke="#040404" stroke-width="2.3" clip-path="url(#cDE)"/>
<rect x="1524.37" y="828.61" width="22.70" height="68.39" fill="url(#gb29)" stroke="#040404" stroke-width="2.3" clip-path="url(#cDE)"/>
<rect x="1556.19" y="793.18" width="22.70" height="103.82" fill="url(#gb30)" stroke="#040404" stroke-width="2.3" clip-path="url(#cDE)"/>
<rect x="1588.02" y="767.89" width="22.70" height="129.11" fill="url(#gb31)" stroke="#040404" stroke-width="2.3" clip-path="url(#cDE)"/>
<rect x="1619.84" y="741.06" width="22.70" height="155.94" fill="url(#gb32)" stroke="#040404" stroke-width="2.3" clip-path="url(#cDE)"/>
<rect x="1651.67" y="695.65" width="22.70" height="201.35" fill="url(#gb33)" stroke="#040404" stroke-width="2.3" clip-path="url(#cDE)"/>
<rect x="1683.49" y="619.80" width="22.70" height="277.20" fill="url(#gb34)" stroke="#040404" stroke-width="2.3" clip-path="url(#cDE)"/>
<rect x="1715.32" y="619.80" width="22.70" height="277.20" fill="url(#gb35)" stroke="#040404" stroke-width="2.3" clip-path="url(#cDE)"/>
<rect x="1747.14" y="619.80" width="22.70" height="277.20" fill="url(#gb36)" stroke="#040404" stroke-width="2.3" clip-path="url(#cDE)"/>
<rect x="1778.96" y="619.80" width="22.70" height="277.20" fill="url(#gb37)" stroke="#040404" stroke-width="2.3" clip-path="url(#cDE)"/>
<rect x="1810.79" y="847.53" width="22.70" height="49.47" fill="url(#gb38)" stroke="#040404" stroke-width="2.3" clip-path="url(#cDE)"/>
<rect x="1842.61" y="847.53" width="22.70" height="49.47" fill="url(#gb39)" stroke="#040404" stroke-width="2.3" clip-path="url(#cDE)"/>
<rect x="1874.44" y="841.34" width="22.70" height="55.66" fill="url(#gb40)" stroke="#040404" stroke-width="2.3" clip-path="url(#cDE)"/>
<rect x="597.80" y="635.60" width="1304.80" height="258.80" fill="none" stroke="#9a9a9a" stroke-width="2.3"/>
<line x1="588.80" y1="894.40" x2="596.60" y2="894.40" stroke="#e2e2e2" stroke-width="2" />
<text x="588.00" y="904.70" font-size="23.00" fill="#e6e6e6" text-anchor="end" >0</text>
<line x1="588.80" y1="808.40" x2="596.60" y2="808.40" stroke="#e2e2e2" stroke-width="2" />
<text x="588.00" y="818.70" font-size="23.00" fill="#e6e6e6" text-anchor="end" >5</text>
<line x1="588.80" y1="722.40" x2="596.60" y2="722.40" stroke="#e2e2e2" stroke-width="2" />
<text x="588.00" y="732.70" font-size="23.00" fill="#e6e6e6" text-anchor="end" >10</text>
<line x1="588.80" y1="636.40" x2="596.60" y2="636.40" stroke="#e2e2e2" stroke-width="2" />
<text x="588.00" y="646.70" font-size="23.00" fill="#e6e6e6" text-anchor="end" >15</text>
<line x1="597.80" y1="895.60" x2="597.80" y2="904.00" stroke="#e2e2e2" stroke-width="2.2" />
<line x1="629.62" y1="895.60" x2="629.62" y2="904.00" stroke="#e2e2e2" stroke-width="2.2" />
<line x1="661.45" y1="895.60" x2="661.45" y2="904.00" stroke="#e2e2e2" stroke-width="2.2" />
<line x1="693.27" y1="895.60" x2="693.27" y2="904.00" stroke="#e2e2e2" stroke-width="2.2" />
<line x1="725.10" y1="895.60" x2="725.10" y2="904.00" stroke="#e2e2e2" stroke-width="2.2" />
<line x1="756.92" y1="895.60" x2="756.92" y2="904.00" stroke="#e2e2e2" stroke-width="2.2" />
<line x1="788.75" y1="895.60" x2="788.75" y2="904.00" stroke="#e2e2e2" stroke-width="2.2" />
<line x1="820.57" y1="895.60" x2="820.57" y2="904.00" stroke="#e2e2e2" stroke-width="2.2" />
<line x1="852.40" y1="895.60" x2="852.40" y2="904.00" stroke="#e2e2e2" stroke-width="2.2" />
<line x1="884.22" y1="895.60" x2="884.22" y2="904.00" stroke="#e2e2e2" stroke-width="2.2" />
<line x1="916.04" y1="895.60" x2="916.04" y2="904.00" stroke="#e2e2e2" stroke-width="2.2" />
<line x1="947.87" y1="895.60" x2="947.87" y2="904.00" stroke="#e2e2e2" stroke-width="2.2" />
<line x1="979.69" y1="895.60" x2="979.69" y2="904.00" stroke="#e2e2e2" stroke-width="2.2" />
<line x1="1011.52" y1="895.60" x2="1011.52" y2="904.00" stroke="#e2e2e2" stroke-width="2.2" />
<line x1="1043.34" y1="895.60" x2="1043.34" y2="904.00" stroke="#e2e2e2" stroke-width="2.2" />
<line x1="1075.17" y1="895.60" x2="1075.17" y2="904.00" stroke="#e2e2e2" stroke-width="2.2" />
<line x1="1106.99" y1="895.60" x2="1106.99" y2="904.00" stroke="#e2e2e2" stroke-width="2.2" />
<line x1="1138.81" y1="895.60" x2="1138.81" y2="904.00" stroke="#e2e2e2" stroke-width="2.2" />
<line x1="1170.64" y1="895.60" x2="1170.64" y2="904.00" stroke="#e2e2e2" stroke-width="2.2" />
<line x1="1202.46" y1="895.60" x2="1202.46" y2="904.00" stroke="#e2e2e2" stroke-width="2.2" />
<line x1="1234.29" y1="895.60" x2="1234.29" y2="904.00" stroke="#e2e2e2" stroke-width="2.2" />
<line x1="1266.11" y1="895.60" x2="1266.11" y2="904.00" stroke="#e2e2e2" stroke-width="2.2" />
<line x1="1297.94" y1="895.60" x2="1297.94" y2="904.00" stroke="#e2e2e2" stroke-width="2.2" />
<line x1="1329.76" y1="895.60" x2="1329.76" y2="904.00" stroke="#e2e2e2" stroke-width="2.2" />
<line x1="1361.59" y1="895.60" x2="1361.59" y2="904.00" stroke="#e2e2e2" stroke-width="2.2" />
<line x1="1393.41" y1="895.60" x2="1393.41" y2="904.00" stroke="#e2e2e2" stroke-width="2.2" />
<line x1="1425.23" y1="895.60" x2="1425.23" y2="904.00" stroke="#e2e2e2" stroke-width="2.2" />
<line x1="1457.06" y1="895.60" x2="1457.06" y2="904.00" stroke="#e2e2e2" stroke-width="2.2" />
<line x1="1488.88" y1="895.60" x2="1488.88" y2="904.00" stroke="#e2e2e2" stroke-width="2.2" />
<line x1="1520.71" y1="895.60" x2="1520.71" y2="904.00" stroke="#e2e2e2" stroke-width="2.2" />
<line x1="1552.53" y1="895.60" x2="1552.53" y2="904.00" stroke="#e2e2e2" stroke-width="2.2" />
<line x1="1584.36" y1="895.60" x2="1584.36" y2="904.00" stroke="#e2e2e2" stroke-width="2.2" />
<line x1="1616.18" y1="895.60" x2="1616.18" y2="904.00" stroke="#e2e2e2" stroke-width="2.2" />
<line x1="1648.00" y1="895.60" x2="1648.00" y2="904.00" stroke="#e2e2e2" stroke-width="2.2" />
<line x1="1679.83" y1="895.60" x2="1679.83" y2="904.00" stroke="#e2e2e2" stroke-width="2.2" />
<line x1="1711.65" y1="895.60" x2="1711.65" y2="904.00" stroke="#e2e2e2" stroke-width="2.2" />
<line x1="1743.48" y1="895.60" x2="1743.48" y2="904.00" stroke="#e2e2e2" stroke-width="2.2" />
<line x1="1775.30" y1="895.60" x2="1775.30" y2="904.00" stroke="#e2e2e2" stroke-width="2.2" />
<line x1="1807.13" y1="895.60" x2="1807.13" y2="904.00" stroke="#e2e2e2" stroke-width="2.2" />
<line x1="1838.95" y1="895.60" x2="1838.95" y2="904.00" stroke="#e2e2e2" stroke-width="2.2" />
<line x1="1870.78" y1="895.60" x2="1870.78" y2="904.00" stroke="#e2e2e2" stroke-width="2.2" />
<line x1="1902.60" y1="895.60" x2="1902.60" y2="904.00" stroke="#e2e2e2" stroke-width="2.2" />
<text x="613.71" y="927.90" font-size="23.00" fill="#e6e6e6" text-anchor="middle" >0</text>
<text x="645.54" y="959.60" font-size="23.00" fill="#e6e6e6" text-anchor="middle" >1</text>
<text x="677.36" y="927.90" font-size="23.00" fill="#e6e6e6" text-anchor="middle" >1.6</text>
<text x="709.19" y="959.60" font-size="23.00" fill="#e6e6e6" text-anchor="middle" >2</text>
<text x="741.01" y="927.90" font-size="23.00" fill="#e6e6e6" text-anchor="middle" >2.4</text>
<text x="772.83" y="959.60" font-size="23.00" fill="#e6e6e6" text-anchor="middle" >3</text>
<text x="804.66" y="927.90" font-size="23.00" fill="#e6e6e6" text-anchor="middle" >4</text>
<text x="836.48" y="959.60" font-size="23.00" fill="#e6e6e6" text-anchor="middle" >5</text>
<text x="868.31" y="927.90" font-size="23.00" fill="#e6e6e6" text-anchor="middle" >6</text>
<text x="900.13" y="959.60" font-size="23.00" fill="#e6e6e6" text-anchor="middle" >7.5</text>
<text x="931.96" y="927.90" font-size="23.00" fill="#e6e6e6" text-anchor="middle" >8</text>
<text x="963.78" y="959.60" font-size="23.00" fill="#e6e6e6" text-anchor="middle" >9</text>
<text x="995.60" y="927.90" font-size="23.00" fill="#e6e6e6" text-anchor="middle" >10</text>
<text x="1027.43" y="959.60" font-size="23.00" fill="#e6e6e6" text-anchor="middle" >12.5</text>
<text x="1059.25" y="927.90" font-size="23.00" fill="#e6e6e6" text-anchor="middle" >15</text>
<text x="1091.08" y="959.60" font-size="23.00" fill="#e6e6e6" text-anchor="middle" >17.6</text>
<text x="1122.90" y="927.90" font-size="23.00" fill="#e6e6e6" text-anchor="middle" >20</text>
<text x="1154.73" y="959.60" font-size="23.00" fill="#e6e6e6" text-anchor="middle" >22.4</text>
<text x="1186.55" y="927.90" font-size="23.00" fill="#e6e6e6" text-anchor="middle" >25</text>
<text x="1218.38" y="959.60" font-size="23.00" fill="#e6e6e6" text-anchor="middle" >27.5</text>
<text x="1250.20" y="927.90" font-size="23.00" fill="#e6e6e6" text-anchor="middle" >30</text>
<text x="1282.02" y="959.60" font-size="23.00" fill="#e6e6e6" text-anchor="middle" >32.5</text>
<text x="1313.85" y="927.90" font-size="23.00" fill="#e6e6e6" text-anchor="middle" >35</text>
<text x="1345.67" y="959.60" font-size="23.00" fill="#e6e6e6" text-anchor="middle" >37.6</text>
<text x="1377.50" y="927.90" font-size="23.00" fill="#e6e6e6" text-anchor="middle" >40</text>
<text x="1409.32" y="959.60" font-size="23.00" fill="#e6e6e6" text-anchor="middle" >42.4</text>
<text x="1441.15" y="927.90" font-size="23.00" fill="#e6e6e6" text-anchor="middle" >45</text>
<text x="1472.97" y="959.60" font-size="23.00" fill="#e6e6e6" text-anchor="middle" >47.5</text>
<text x="1504.80" y="927.90" font-size="23.00" fill="#e6e6e6" text-anchor="middle" >50</text>
<text x="1536.62" y="959.60" font-size="23.00" fill="#e6e6e6" text-anchor="middle" >52.5</text>
<text x="1568.44" y="927.90" font-size="23.00" fill="#e6e6e6" text-anchor="middle" >55</text>
<text x="1600.27" y="959.60" font-size="23.00" fill="#e6e6e6" text-anchor="middle" >57.6</text>
<text x="1632.09" y="927.90" font-size="23.00" fill="#e6e6e6" text-anchor="middle" >60</text>
<text x="1663.92" y="959.60" font-size="23.00" fill="#e6e6e6" text-anchor="middle" >65</text>
<text x="1695.74" y="927.90" font-size="23.00" fill="#e6e6e6" text-anchor="middle" >70</text>
<text x="1727.57" y="959.60" font-size="23.00" fill="#e6e6e6" text-anchor="middle" >75</text>
<text x="1759.39" y="927.90" font-size="23.00" fill="#e6e6e6" text-anchor="middle" >80</text>
<text x="1791.21" y="959.60" font-size="23.00" fill="#e6e6e6" text-anchor="middle" >85</text>
<text x="1823.04" y="927.90" font-size="23.00" fill="#e6e6e6" text-anchor="middle" >90</text>
<text x="1854.86" y="959.60" font-size="23.00" fill="#e6e6e6" text-anchor="middle" >95</text>
<text x="1886.69" y="927.90" font-size="23.00" fill="#e6e6e6" text-anchor="middle" >100</text>
<text x="2209.60" y="178.20" font-size="22.00" fill="#e6e6e6" textLength="51.00" lengthAdjust="spacingAndGlyphs" >EOTF</text>
<rect x="1981.70" y="187.30" width="546.90" height="529.10" fill="#222222" />
<line x1="1981.70" y1="664.70" x2="2528.60" y2="664.70" stroke="#868686" stroke-width="2" />
<line x1="1981.70" y1="611.73" x2="2528.60" y2="611.73" stroke="#868686" stroke-width="2" />
<line x1="1981.70" y1="558.76" x2="2528.60" y2="558.76" stroke="#868686" stroke-width="2" />
<line x1="1981.70" y1="505.79" x2="2528.60" y2="505.79" stroke="#868686" stroke-width="2" />
<line x1="1981.70" y1="452.82" x2="2528.60" y2="452.82" stroke="#868686" stroke-width="2" />
<line x1="1981.70" y1="399.85" x2="2528.60" y2="399.85" stroke="#868686" stroke-width="2" />
<line x1="1981.70" y1="346.88" x2="2528.60" y2="346.88" stroke="#868686" stroke-width="2" />
<line x1="1981.70" y1="293.91" x2="2528.60" y2="293.91" stroke="#868686" stroke-width="2" />
<line x1="1981.70" y1="240.94" x2="2528.60" y2="240.94" stroke="#868686" stroke-width="2" />
<line x1="1981.70" y1="189.60" x2="2528.60" y2="189.60" stroke="#868686" stroke-width="1.6" />
<clipPath id="cEO"><rect x="1981.7" y="187.3" width="546.9" height="530.1"/></clipPath>
<polyline points="1981.7,713.4 2036.4,663.1 2091.1,613.3 2145.8,558.2 2200.5,503.1 2255.2,451.2 2309.8,398.8 2364.5,343.7 2419.2,284.9 2446.6,263.2 2471.2,243.9 2528.6,243.3" fill="none" stroke="#ffff00" stroke-width="3.6" stroke-linejoin="round" clip-path="url(#cEO)"/>
<polyline points="1981.7,716.4 1992.6,716.4 1994.8,706.0 2003.6,698.6 2022.7,681.7 2036.4,663.4 2091.1,611.7 2104.2,596.4 2145.8,560.3 2200.5,506.8 2255.2,450.2 2309.8,394.6 2364.5,334.2 2419.2,272.7 2446.6,248.4 2473.9,245.7 2501.3,245.7 2528.6,244.6" fill="none" stroke="#828282" stroke-width="3.6" stroke-linejoin="round" clip-path="url(#cEO)"/>
<rect x="1981.70" y="187.30" width="546.90" height="529.10" fill="none" stroke="#9a9a9a" stroke-width="2.3"/>
<line x1="1972.70" y1="716.40" x2="1980.50" y2="716.40" stroke="#e2e2e2" stroke-width="2" />
<text x="1972.20" y="725.10" font-size="23.00" fill="#e6e6e6" text-anchor="end" >0</text>
<line x1="1972.70" y1="664.70" x2="1980.50" y2="664.70" stroke="#e2e2e2" stroke-width="2" />
<text x="1972.20" y="673.40" font-size="23.00" fill="#e6e6e6" text-anchor="end" >0.1</text>
<line x1="1972.70" y1="611.73" x2="1980.50" y2="611.73" stroke="#e2e2e2" stroke-width="2" />
<text x="1972.20" y="620.43" font-size="23.00" fill="#e6e6e6" text-anchor="end" >0.2</text>
<line x1="1972.70" y1="558.76" x2="1980.50" y2="558.76" stroke="#e2e2e2" stroke-width="2" />
<text x="1972.20" y="567.46" font-size="23.00" fill="#e6e6e6" text-anchor="end" >0.3</text>
<line x1="1972.70" y1="505.79" x2="1980.50" y2="505.79" stroke="#e2e2e2" stroke-width="2" />
<text x="1972.20" y="514.49" font-size="23.00" fill="#e6e6e6" text-anchor="end" >0.4</text>
<line x1="1972.70" y1="452.82" x2="1980.50" y2="452.82" stroke="#e2e2e2" stroke-width="2" />
<text x="1972.20" y="461.52" font-size="23.00" fill="#e6e6e6" text-anchor="end" >0.5</text>
<line x1="1972.70" y1="399.85" x2="1980.50" y2="399.85" stroke="#e2e2e2" stroke-width="2" />
<text x="1972.20" y="408.55" font-size="23.00" fill="#e6e6e6" text-anchor="end" >0.6</text>
<line x1="1972.70" y1="346.88" x2="1980.50" y2="346.88" stroke="#e2e2e2" stroke-width="2" />
<text x="1972.20" y="355.58" font-size="23.00" fill="#e6e6e6" text-anchor="end" >0.7</text>
<line x1="1972.70" y1="293.91" x2="1980.50" y2="293.91" stroke="#e2e2e2" stroke-width="2" />
<text x="1972.20" y="302.61" font-size="23.00" fill="#e6e6e6" text-anchor="end" >0.8</text>
<line x1="1972.70" y1="240.94" x2="1980.50" y2="240.94" stroke="#e2e2e2" stroke-width="2" />
<text x="1972.20" y="249.64" font-size="23.00" fill="#e6e6e6" text-anchor="end" >0.9</text>
<line x1="1972.70" y1="187.97" x2="1980.50" y2="187.97" stroke="#e2e2e2" stroke-width="2" />
<text x="1972.20" y="196.67" font-size="23.00" fill="#e6e6e6" text-anchor="end" >1</text>
<line x1="1981.70" y1="717.60" x2="1981.70" y2="726.00" stroke="#e2e2e2" stroke-width="2.2" />
<text x="1981.70" y="749.80" font-size="23.00" fill="#e6e6e6" text-anchor="middle" >0</text>
<line x1="2091.08" y1="717.60" x2="2091.08" y2="726.00" stroke="#e2e2e2" stroke-width="2.2" />
<text x="2091.08" y="749.80" font-size="23.00" fill="#e6e6e6" text-anchor="middle" >20</text>
<line x1="2200.46" y1="717.60" x2="2200.46" y2="726.00" stroke="#e2e2e2" stroke-width="2.2" />
<text x="2200.46" y="749.80" font-size="23.00" fill="#e6e6e6" text-anchor="middle" >40</text>
<line x1="2309.84" y1="717.60" x2="2309.84" y2="726.00" stroke="#e2e2e2" stroke-width="2.2" />
<text x="2309.84" y="749.80" font-size="23.00" fill="#e6e6e6" text-anchor="middle" >60</text>
<line x1="2419.22" y1="717.60" x2="2419.22" y2="726.00" stroke="#e2e2e2" stroke-width="2.2" />
<text x="2419.22" y="749.80" font-size="23.00" fill="#e6e6e6" text-anchor="middle" >80</text>
<line x1="2528.60" y1="717.60" x2="2528.60" y2="726.00" stroke="#e2e2e2" stroke-width="2.2" />
<text x="2528.60" y="749.80" font-size="23.00" fill="#e6e6e6" text-anchor="middle" >100</text>
<text x="2180.50" y="814.80" font-size="22.00" fill="#e6e6e6" textLength="110.00" lengthAdjust="spacingAndGlyphs" >Luminance</text>
<rect x="2001.00" y="823.20" width="528.00" height="494.80" fill="#222222" />
<line x1="2001.00" y1="1257.20" x2="2529.00" y2="1257.20" stroke="#868686" stroke-width="2" />
<line x1="2001.00" y1="1195.20" x2="2529.00" y2="1195.20" stroke="#868686" stroke-width="2" />
<line x1="2001.00" y1="1133.20" x2="2529.00" y2="1133.20" stroke="#868686" stroke-width="2" />
<line x1="2001.00" y1="1071.20" x2="2529.00" y2="1071.20" stroke="#868686" stroke-width="2" />
<line x1="2001.00" y1="1009.20" x2="2529.00" y2="1009.20" stroke="#868686" stroke-width="2" />
<line x1="2001.00" y1="947.20" x2="2529.00" y2="947.20" stroke="#868686" stroke-width="2" />
<line x1="2001.00" y1="885.20" x2="2529.00" y2="885.20" stroke="#868686" stroke-width="2" />
<clipPath id="cLU"><rect x="2001.0" y="823.2" width="528.0" height="495.8"/></clipPath>
<polyline points="2001.0,1318.0 2006.3,1318.0 2009.4,1318.0 2011.6,1318.0 2013.7,1318.0 2016.8,1318.0 2022.1,1318.0 2027.4,1318.0 2032.7,1318.0 2040.6,1318.0 2043.2,1318.0 2048.5,1318.0 2053.8,1318.0 2067.0,1318.0 2080.2,1319.1 2093.9,1319.0 2106.6,1318.9 2119.3,1318.8 2133.0,1318.6 2146.2,1318.3 2159.4,1318.0 2172.6,1317.5 2185.8,1316.9 2199.5,1316.1 2212.2,1315.2 2224.9,1314.0 2238.6,1312.3 2251.8,1310.3 2265.0,1307.8 2278.2,1304.5 2291.4,1300.5 2304.6,1295.4 2305.1,1295.1 2317.8,1288.9 2331.0,1280.9 2344.2,1270.8 2357.4,1258.1 2370.6,1242.2 2383.8,1222.3 2397.0,1197.3 2410.2,1165.8 2423.4,1126.4 2436.6,1076.7 2449.8,1014.0 2463.0,934.9 2470.7,879.2 2476.2,879.2 2489.4,879.2 2502.6,879.2 2515.8,879.2 2529.0,879.2" fill="none" stroke="#ffff00" stroke-width="4.2" stroke-linejoin="round" clip-path="url(#cLU)"/>
<polyline points="2001.0,1318.0 2003.6,1318.0 2006.3,1318.0 2008.9,1318.0 2011.6,1318.0 2014.2,1318.0 2016.8,1318.0 2019.5,1318.0 2022.1,1318.0 2024.8,1318.0 2027.4,1318.0 2030.0,1318.0 2032.7,1318.0 2035.3,1318.0 2038.0,1318.0 2040.6,1318.0 2043.2,1318.0 2045.9,1318.0 2048.5,1318.0 2051.2,1318.0 2053.8,1318.0 2056.4,1318.0 2059.1,1318.0 2061.7,1318.0 2064.4,1318.0 2067.0,1318.0 2069.6,1318.0 2072.3,1318.0 2074.9,1318.0 2077.6,1318.0 2080.2,1319.1 2082.8,1319.1 2085.5,1319.0 2088.1,1319.0 2090.8,1319.0 2093.4,1319.0 2096.0,1319.0 2098.7,1319.0 2101.3,1318.9 2104.0,1318.9 2106.6,1318.9 2109.2,1318.9 2111.9,1318.8 2114.5,1318.8 2117.2,1318.8 2119.8,1318.8 2122.4,1318.7 2125.1,1318.7 2127.7,1318.6 2130.4,1318.6 2133.0,1318.6 2135.6,1318.5 2138.3,1318.5 2140.9,1318.4 2143.6,1318.4 2146.2,1318.3 2148.8,1318.2 2151.5,1318.2 2154.1,1318.1 2156.8,1318.0 2159.4,1318.0 2162.0,1317.9 2164.7,1317.8 2167.3,1317.7 2170.0,1317.6 2172.6,1317.5 2175.2,1317.4 2177.9,1317.3 2180.5,1317.2 2183.2,1317.0 2185.8,1316.9 2188.4,1316.8 2191.1,1316.6 2193.7,1316.5 2196.4,1316.3 2199.0,1316.2 2201.6,1316.0 2204.3,1315.8 2206.9,1315.6 2209.6,1315.4 2212.2,1315.2 2214.8,1315.0 2217.5,1314.7 2220.1,1314.5 2222.8,1314.2 2225.4,1313.9 2228.0,1313.6 2230.7,1313.3 2233.3,1313.0 2236.0,1312.7 2238.6,1312.3 2251.8,1309.3 2265.0,1306.9 2278.2,1303.1 2291.4,1298.2 2305.1,1291.7 2317.8,1284.0 2344.2,1260.7 2370.6,1224.3 2397.0,1159.7 2423.4,1054.7 2449.8,911.2 2476.2,887.1 2502.6,887.1 2529.0,878.1" fill="none" stroke="#828282" stroke-width="3.9" stroke-linejoin="round" clip-path="url(#cLU)"/>
<rect x="2001.00" y="823.20" width="528.00" height="494.80" fill="none" stroke="#9a9a9a" stroke-width="2.3"/>
<line x1="1992.00" y1="1318.00" x2="1999.80" y2="1318.00" stroke="#e2e2e2" stroke-width="2" />
<text x="1991.50" y="1326.10" font-size="23.00" fill="#e6e6e6" text-anchor="end" >0</text>
<line x1="1992.00" y1="1257.20" x2="1999.80" y2="1257.20" stroke="#e2e2e2" stroke-width="2" />
<text x="1991.50" y="1265.30" font-size="23.00" fill="#e6e6e6" text-anchor="end" >500</text>
<line x1="1992.00" y1="1195.20" x2="1999.80" y2="1195.20" stroke="#e2e2e2" stroke-width="2" />
<text x="1991.50" y="1203.30" font-size="23.00" fill="#e6e6e6" text-anchor="end" >1000</text>
<line x1="1992.00" y1="1133.20" x2="1999.80" y2="1133.20" stroke="#e2e2e2" stroke-width="2" />
<text x="1991.50" y="1141.30" font-size="23.00" fill="#e6e6e6" text-anchor="end" >1500</text>
<line x1="1992.00" y1="1071.20" x2="1999.80" y2="1071.20" stroke="#e2e2e2" stroke-width="2" />
<text x="1991.50" y="1079.30" font-size="23.00" fill="#e6e6e6" text-anchor="end" >2000</text>
<line x1="1992.00" y1="1009.20" x2="1999.80" y2="1009.20" stroke="#e2e2e2" stroke-width="2" />
<text x="1991.50" y="1017.30" font-size="23.00" fill="#e6e6e6" text-anchor="end" >2500</text>
<line x1="1992.00" y1="947.20" x2="1999.80" y2="947.20" stroke="#e2e2e2" stroke-width="2" />
<text x="1991.50" y="955.30" font-size="23.00" fill="#e6e6e6" text-anchor="end" >3000</text>
<line x1="1992.00" y1="885.20" x2="1999.80" y2="885.20" stroke="#e2e2e2" stroke-width="2" />
<text x="1991.50" y="893.30" font-size="23.00" fill="#e6e6e6" text-anchor="end" >3500</text>
<line x1="1992.00" y1="823.20" x2="1999.80" y2="823.20" stroke="#e2e2e2" stroke-width="2" />
<text x="1991.50" y="831.30" font-size="23.00" fill="#e6e6e6" text-anchor="end" >4000</text>
<rect x="1518.60" y="1043.80" width="384.00" height="276.20" fill="#222222" />
<line x1="1518.60" y1="1291.60" x2="1902.60" y2="1291.60" stroke="#868686" stroke-width="2" />
<line x1="1518.60" y1="1236.30" x2="1902.60" y2="1236.30" stroke="#868686" stroke-width="2" />
<line x1="1518.60" y1="1181.00" x2="1902.60" y2="1181.00" stroke="#868686" stroke-width="2" />
<line x1="1518.60" y1="1125.70" x2="1902.60" y2="1125.70" stroke="#868686" stroke-width="2" />
<line x1="1518.60" y1="1070.40" x2="1902.60" y2="1070.40" stroke="#868686" stroke-width="2" />
<rect x="1518.60" y="1043.80" width="384.00" height="276.20" fill="none" stroke="#9a9a9a" stroke-width="2.3"/>
<line x1="1509.60" y1="1291.60" x2="1517.40" y2="1291.60" stroke="#e2e2e2" stroke-width="2" />
<text x="1509.10" y="1302.50" font-size="23.00" fill="#e6e6e6" text-anchor="end" >96</text>
<line x1="1509.60" y1="1236.30" x2="1517.40" y2="1236.30" stroke="#e2e2e2" stroke-width="2" />
<text x="1509.10" y="1247.20" font-size="23.00" fill="#e6e6e6" text-anchor="end" >98</text>
<line x1="1509.60" y1="1181.00" x2="1517.40" y2="1181.00" stroke="#e2e2e2" stroke-width="2" />
<text x="1509.10" y="1191.90" font-size="23.00" fill="#e6e6e6" text-anchor="end" >100</text>
<line x1="1509.60" y1="1125.70" x2="1517.40" y2="1125.70" stroke="#e2e2e2" stroke-width="2" />
<text x="1509.10" y="1136.60" font-size="23.00" fill="#e6e6e6" text-anchor="end" >102</text>
<line x1="1509.60" y1="1070.40" x2="1517.40" y2="1070.40" stroke="#e2e2e2" stroke-width="2" />
<text x="1509.10" y="1081.30" font-size="23.00" fill="#e6e6e6" text-anchor="end" >104</text>
<line x1="1518.60" y1="1321.20" x2="1518.60" y2="1329.60" stroke="#e2e2e2" stroke-width="2.2" />
<line x1="1902.60" y1="1321.20" x2="1902.60" y2="1329.60" stroke="#e2e2e2" stroke-width="2.2" />
<rect x="1556.6" y="1206.6" width="98.8" height="112.8" fill="url(#gB0)" stroke="#000" stroke-width="1.8"/>
<rect x="1658.0" y="1171.2" width="100.8" height="148.2" fill="url(#gB1)" stroke="#000" stroke-width="1.8"/>
<rect x="1761.8" y="1223.2" width="99.0" height="96.2" fill="url(#gB2)" stroke="#000" stroke-width="1.8"/>
<line x1="1517.50" y1="1320.00" x2="1903.70" y2="1320.00" stroke="#9a9a9a" stroke-width="2.3" />
<text x="1710.20" y="1344.60" font-size="23.00" fill="#e6e6e6" text-anchor="middle" >100</text>
<text x="22.20" y="1079.00" font-size="29.40" fill="#f2f2f2" textLength="232.50" lengthAdjust="spacingAndGlyphs" >Current Reading:</text>
<text x="22.20" y="1139.20" font-size="37.60" fill="#f2f2f2" textLength="158.00" lengthAdjust="spacingAndGlyphs" >x: 0.3126</text>
<text x="22.20" y="1201.80" font-size="37.60" fill="#f2f2f2" textLength="158.00" lengthAdjust="spacingAndGlyphs" >y: 0.3355</text>
<text x="22.20" y="1264.90" font-size="37.60" fill="#f2f2f2" textLength="213.50" lengthAdjust="spacingAndGlyphs" >fL: 1035.609</text>
<text x="22.20" y="1327.20" font-size="37.60" fill="#f2f2f2" textLength="288.00" lengthAdjust="spacingAndGlyphs" >cd/m²: 3548.264</text>
<rect x="377.00" y="1026.00" width="1074.40" height="307.40" fill="#0c0c0c" />
<rect x="379.40" y="1028.20" width="1070.00" height="41.80" fill="url(#gTH)" />
<text x="620.40" y="1057.20" font-size="20.40" fill="#f0f0f0" text-anchor="middle" textLength="11.23" lengthAdjust="spacingAndGlyphs" >0</text>
<text x="692.40" y="1057.20" font-size="20.40" fill="#f0f0f0" text-anchor="middle" textLength="11.23" lengthAdjust="spacingAndGlyphs" >1</text>
<text x="764.40" y="1057.20" font-size="20.40" fill="#f0f0f0" text-anchor="middle" textLength="28.08" lengthAdjust="spacingAndGlyphs" >1.6</text>
<text x="836.40" y="1057.20" font-size="20.40" fill="#f0f0f0" text-anchor="middle" textLength="11.23" lengthAdjust="spacingAndGlyphs" >2</text>
<text x="908.40" y="1057.20" font-size="20.40" fill="#f0f0f0" text-anchor="middle" textLength="28.08" lengthAdjust="spacingAndGlyphs" >2.4</text>
<text x="980.40" y="1057.20" font-size="20.40" fill="#f0f0f0" text-anchor="middle" textLength="11.23" lengthAdjust="spacingAndGlyphs" >3</text>
<text x="1052.40" y="1057.20" font-size="20.40" fill="#f0f0f0" text-anchor="middle" textLength="11.23" lengthAdjust="spacingAndGlyphs" >4</text>
<text x="1124.40" y="1057.20" font-size="20.40" fill="#f0f0f0" text-anchor="middle" textLength="11.23" lengthAdjust="spacingAndGlyphs" >5</text>
<text x="1196.40" y="1057.20" font-size="20.40" fill="#f0f0f0" text-anchor="middle" textLength="11.23" lengthAdjust="spacingAndGlyphs" >6</text>
<text x="1268.40" y="1057.20" font-size="20.40" fill="#f0f0f0" text-anchor="middle" textLength="28.08" lengthAdjust="spacingAndGlyphs" >7.5</text>
<text x="1340.40" y="1057.20" font-size="20.40" fill="#f0f0f0" text-anchor="middle" textLength="11.23" lengthAdjust="spacingAndGlyphs" >8</text>
<text x="1412.40" y="1057.20" font-size="20.40" fill="#f0f0f0" text-anchor="middle" textLength="11.23" lengthAdjust="spacingAndGlyphs" >9</text>
<rect x="379.40" y="1070.00" width="1070.00" height="40.02" fill="#444444" />
<text x="397.60" y="1099.70" font-size="25.00" fill="#f4f4f4" font-weight="bold" textLength="15.50" lengthAdjust="spacingAndGlyphs" >Y</text>
<text x="620.40" y="1099.70" font-size="24.60" fill="#f4f4f4" text-anchor="middle" textLength="58.79" lengthAdjust="spacingAndGlyphs" >0.000</text>
<text x="692.40" y="1099.70" font-size="24.60" fill="#f4f4f4" text-anchor="middle" textLength="58.79" lengthAdjust="spacingAndGlyphs" >0.000</text>
<text x="764.40" y="1099.70" font-size="24.60" fill="#f4f4f4" text-anchor="middle" textLength="58.79" lengthAdjust="spacingAndGlyphs" >0.000</text>
<text x="836.40" y="1099.70" font-size="24.60" fill="#f4f4f4" text-anchor="middle" textLength="58.79" lengthAdjust="spacingAndGlyphs" >0.000</text>
<text x="908.40" y="1099.70" font-size="24.60" fill="#f4f4f4" text-anchor="middle" textLength="58.79" lengthAdjust="spacingAndGlyphs" >0.007</text>
<text x="980.40" y="1099.70" font-size="24.60" fill="#f4f4f4" text-anchor="middle" textLength="58.79" lengthAdjust="spacingAndGlyphs" >0.012</text>
<text x="1052.40" y="1099.70" font-size="24.60" fill="#f4f4f4" text-anchor="middle" textLength="58.79" lengthAdjust="spacingAndGlyphs" >0.019</text>
<text x="1124.40" y="1099.70" font-size="24.60" fill="#f4f4f4" text-anchor="middle" textLength="58.79" lengthAdjust="spacingAndGlyphs" >0.040</text>
<text x="1196.40" y="1099.70" font-size="24.60" fill="#f4f4f4" text-anchor="middle" textLength="58.79" lengthAdjust="spacingAndGlyphs" >0.065</text>
<text x="1268.40" y="1099.70" font-size="24.60" fill="#f4f4f4" text-anchor="middle" textLength="58.79" lengthAdjust="spacingAndGlyphs" >0.108</text>
<text x="1340.40" y="1099.70" font-size="24.60" fill="#f4f4f4" text-anchor="middle" textLength="58.79" lengthAdjust="spacingAndGlyphs" >0.131</text>
<text x="1412.40" y="1099.70" font-size="24.60" fill="#f4f4f4" text-anchor="middle" textLength="58.79" lengthAdjust="spacingAndGlyphs" >0.209</text>
<rect x="379.40" y="1109.72" width="1070.00" height="40.02" fill="#838383" />
<text x="397.60" y="1139.42" font-size="25.00" fill="#ededed" font-weight="bold" textLength="92.00" lengthAdjust="spacingAndGlyphs" >x: CIE31</text>
<text x="620.40" y="1139.42" font-size="24.60" fill="#ededed" text-anchor="middle" textLength="58.79" lengthAdjust="spacingAndGlyphs" >0.333</text>
<text x="692.40" y="1139.42" font-size="24.60" fill="#ededed" text-anchor="middle" textLength="58.79" lengthAdjust="spacingAndGlyphs" >0.333</text>
<text x="764.40" y="1139.42" font-size="24.60" fill="#ededed" text-anchor="middle" textLength="58.79" lengthAdjust="spacingAndGlyphs" >0.333</text>
<text x="836.40" y="1139.42" font-size="24.60" fill="#ededed" text-anchor="middle" textLength="58.79" lengthAdjust="spacingAndGlyphs" >0.333</text>
<text x="908.40" y="1139.42" font-size="24.60" fill="#ededed" text-anchor="middle" textLength="58.79" lengthAdjust="spacingAndGlyphs" >0.253</text>
<text x="980.40" y="1139.42" font-size="24.60" fill="#ededed" text-anchor="middle" textLength="58.79" lengthAdjust="spacingAndGlyphs" >0.261</text>
<text x="1052.40" y="1139.42" font-size="24.60" fill="#ededed" text-anchor="middle" textLength="58.79" lengthAdjust="spacingAndGlyphs" >0.271</text>
<text x="1124.40" y="1139.42" font-size="24.60" fill="#ededed" text-anchor="middle" textLength="58.79" lengthAdjust="spacingAndGlyphs" >0.287</text>
<text x="1196.40" y="1139.42" font-size="24.60" fill="#ededed" text-anchor="middle" textLength="58.79" lengthAdjust="spacingAndGlyphs" >0.294</text>
<text x="1268.40" y="1139.42" font-size="24.60" fill="#ededed" text-anchor="middle" textLength="58.79" lengthAdjust="spacingAndGlyphs" >0.296</text>
<text x="1340.40" y="1139.42" font-size="24.60" fill="#ededed" text-anchor="middle" textLength="58.79" lengthAdjust="spacingAndGlyphs" >0.301</text>
<text x="1412.40" y="1139.42" font-size="24.60" fill="#ededed" text-anchor="middle" textLength="58.79" lengthAdjust="spacingAndGlyphs" >0.302</text>
<rect x="379.40" y="1149.43" width="1070.00" height="40.02" fill="#444444" />
<text x="397.60" y="1179.13" font-size="25.00" fill="#f4f4f4" font-weight="bold" textLength="92.00" lengthAdjust="spacingAndGlyphs" >y: CIE31</text>
<text x="620.40" y="1179.13" font-size="24.60" fill="#f4f4f4" text-anchor="middle" textLength="58.79" lengthAdjust="spacingAndGlyphs" >0.333</text>
<text x="692.40" y="1179.13" font-size="24.60" fill="#f4f4f4" text-anchor="middle" textLength="58.79" lengthAdjust="spacingAndGlyphs" >0.333</text>
<text x="764.40" y="1179.13" font-size="24.60" fill="#f4f4f4" text-anchor="middle" textLength="58.79" lengthAdjust="spacingAndGlyphs" >0.333</text>
<text x="836.40" y="1179.13" font-size="24.60" fill="#f4f4f4" text-anchor="middle" textLength="58.79" lengthAdjust="spacingAndGlyphs" >0.333</text>
<text x="908.40" y="1179.13" font-size="24.60" fill="#f4f4f4" text-anchor="middle" textLength="58.79" lengthAdjust="spacingAndGlyphs" >0.229</text>
<text x="980.40" y="1179.13" font-size="24.60" fill="#f4f4f4" text-anchor="middle" textLength="58.79" lengthAdjust="spacingAndGlyphs" >0.239</text>
<text x="1052.40" y="1179.13" font-size="24.60" fill="#f4f4f4" text-anchor="middle" textLength="58.79" lengthAdjust="spacingAndGlyphs" >0.255</text>
<text x="1124.40" y="1179.13" font-size="24.60" fill="#f4f4f4" text-anchor="middle" textLength="58.79" lengthAdjust="spacingAndGlyphs" >0.279</text>
<text x="1196.40" y="1179.13" font-size="24.60" fill="#f4f4f4" text-anchor="middle" textLength="58.79" lengthAdjust="spacingAndGlyphs" >0.289</text>
<text x="1268.40" y="1179.13" font-size="24.60" fill="#f4f4f4" text-anchor="middle" textLength="58.79" lengthAdjust="spacingAndGlyphs" >0.297</text>
<text x="1340.40" y="1179.13" font-size="24.60" fill="#f4f4f4" text-anchor="middle" textLength="58.79" lengthAdjust="spacingAndGlyphs" >0.295</text>
<text x="1412.40" y="1179.13" font-size="24.60" fill="#f4f4f4" text-anchor="middle" textLength="58.79" lengthAdjust="spacingAndGlyphs" >0.304</text>
<rect x="379.40" y="1189.15" width="1070.00" height="40.02" fill="#838383" />
<text x="397.60" y="1218.85" font-size="25.00" fill="#ededed" font-weight="bold" textLength="96.00" lengthAdjust="spacingAndGlyphs" >Target Y</text>
<text x="620.40" y="1218.85" font-size="24.60" fill="#ededed" text-anchor="middle" textLength="58.79" lengthAdjust="spacingAndGlyphs" >0.000</text>
<text x="692.40" y="1218.85" font-size="24.60" fill="#ededed" text-anchor="middle" textLength="58.79" lengthAdjust="spacingAndGlyphs" >0.003</text>
<text x="764.40" y="1218.85" font-size="24.60" fill="#ededed" text-anchor="middle" textLength="58.79" lengthAdjust="spacingAndGlyphs" >0.005</text>
<text x="836.40" y="1218.85" font-size="24.60" fill="#ededed" text-anchor="middle" textLength="58.79" lengthAdjust="spacingAndGlyphs" >0.008</text>
<text x="908.40" y="1218.85" font-size="24.60" fill="#ededed" text-anchor="middle" textLength="58.79" lengthAdjust="spacingAndGlyphs" >0.012</text>
<text x="980.40" y="1218.85" font-size="24.60" fill="#ededed" text-anchor="middle" textLength="58.79" lengthAdjust="spacingAndGlyphs" >0.022</text>
<text x="1052.40" y="1218.85" font-size="24.60" fill="#ededed" text-anchor="middle" textLength="58.79" lengthAdjust="spacingAndGlyphs" >0.035</text>
<text x="1124.40" y="1218.85" font-size="24.60" fill="#ededed" text-anchor="middle" textLength="58.79" lengthAdjust="spacingAndGlyphs" >0.063</text>
<text x="1196.40" y="1218.85" font-size="24.60" fill="#ededed" text-anchor="middle" textLength="58.79" lengthAdjust="spacingAndGlyphs" >0.087</text>
<text x="1268.40" y="1218.85" font-size="24.60" fill="#ededed" text-anchor="middle" textLength="58.79" lengthAdjust="spacingAndGlyphs" >0.154</text>
<text x="1340.40" y="1218.85" font-size="24.60" fill="#ededed" text-anchor="middle" textLength="58.79" lengthAdjust="spacingAndGlyphs" >0.174</text>
<text x="1412.40" y="1218.85" font-size="24.60" fill="#ededed" text-anchor="middle" textLength="58.79" lengthAdjust="spacingAndGlyphs" >0.248</text>
<rect x="379.40" y="1228.87" width="1070.00" height="40.02" fill="#444444" />
<text x="397.60" y="1258.57" font-size="25.00" fill="#f4f4f4" font-weight="bold" textLength="166.50" lengthAdjust="spacingAndGlyphs" >Target x:CIE31</text>
<text x="620.40" y="1258.57" font-size="24.60" fill="#f4f4f4" text-anchor="middle" textLength="58.79" lengthAdjust="spacingAndGlyphs" >0.313</text>
<text x="692.40" y="1258.57" font-size="24.60" fill="#f4f4f4" text-anchor="middle" textLength="58.79" lengthAdjust="spacingAndGlyphs" >0.313</text>
<text x="764.40" y="1258.57" font-size="24.60" fill="#f4f4f4" text-anchor="middle" textLength="58.79" lengthAdjust="spacingAndGlyphs" >0.313</text>
<text x="836.40" y="1258.57" font-size="24.60" fill="#f4f4f4" text-anchor="middle" textLength="58.79" lengthAdjust="spacingAndGlyphs" >0.313</text>
<text x="908.40" y="1258.57" font-size="24.60" fill="#f4f4f4" text-anchor="middle" textLength="58.79" lengthAdjust="spacingAndGlyphs" >0.313</text>
<text x="980.40" y="1258.57" font-size="24.60" fill="#f4f4f4" text-anchor="middle" textLength="58.79" lengthAdjust="spacingAndGlyphs" >0.313</text>
<text x="1052.40" y="1258.57" font-size="24.60" fill="#f4f4f4" text-anchor="middle" textLength="58.79" lengthAdjust="spacingAndGlyphs" >0.313</text>
<text x="1124.40" y="1258.57" font-size="24.60" fill="#f4f4f4" text-anchor="middle" textLength="58.79" lengthAdjust="spacingAndGlyphs" >0.313</text>
<text x="1196.40" y="1258.57" font-size="24.60" fill="#f4f4f4" text-anchor="middle" textLength="58.79" lengthAdjust="spacingAndGlyphs" >0.313</text>
<text x="1268.40" y="1258.57" font-size="24.60" fill="#f4f4f4" text-anchor="middle" textLength="58.79" lengthAdjust="spacingAndGlyphs" >0.313</text>
<text x="1340.40" y="1258.57" font-size="24.60" fill="#f4f4f4" text-anchor="middle" textLength="58.79" lengthAdjust="spacingAndGlyphs" >0.313</text>
<text x="1412.40" y="1258.57" font-size="24.60" fill="#f4f4f4" text-anchor="middle" textLength="58.79" lengthAdjust="spacingAndGlyphs" >0.313</text>
<rect x="379.40" y="1268.58" width="1070.00" height="40.02" fill="#838383" />
<text x="397.60" y="1298.28" font-size="25.00" fill="#ededed" font-weight="bold" textLength="166.50" lengthAdjust="spacingAndGlyphs" >Target y:CIE31</text>
<text x="620.40" y="1298.28" font-size="24.60" fill="#ededed" text-anchor="middle" textLength="58.79" lengthAdjust="spacingAndGlyphs" >0.329</text>
<text x="692.40" y="1298.28" font-size="24.60" fill="#ededed" text-anchor="middle" textLength="58.79" lengthAdjust="spacingAndGlyphs" >0.329</text>
<text x="764.40" y="1298.28" font-size="24.60" fill="#ededed" text-anchor="middle" textLength="58.79" lengthAdjust="spacingAndGlyphs" >0.329</text>
<text x="836.40" y="1298.28" font-size="24.60" fill="#ededed" text-anchor="middle" textLength="58.79" lengthAdjust="spacingAndGlyphs" >0.329</text>
<text x="908.40" y="1298.28" font-size="24.60" fill="#ededed" text-anchor="middle" textLength="58.79" lengthAdjust="spacingAndGlyphs" >0.329</text>
<text x="980.40" y="1298.28" font-size="24.60" fill="#ededed" text-anchor="middle" textLength="58.79" lengthAdjust="spacingAndGlyphs" >0.329</text>
<text x="1052.40" y="1298.28" font-size="24.60" fill="#ededed" text-anchor="middle" textLength="58.79" lengthAdjust="spacingAndGlyphs" >0.329</text>
<text x="1124.40" y="1298.28" font-size="24.60" fill="#ededed" text-anchor="middle" textLength="58.79" lengthAdjust="spacingAndGlyphs" >0.329</text>
<text x="1196.40" y="1298.28" font-size="24.60" fill="#ededed" text-anchor="middle" textLength="58.79" lengthAdjust="spacingAndGlyphs" >0.329</text>
<text x="1268.40" y="1298.28" font-size="24.60" fill="#ededed" text-anchor="middle" textLength="58.79" lengthAdjust="spacingAndGlyphs" >0.329</text>
<text x="1340.40" y="1298.28" font-size="24.60" fill="#ededed" text-anchor="middle" textLength="58.79" lengthAdjust="spacingAndGlyphs" >0.329</text>
<text x="1412.40" y="1298.28" font-size="24.60" fill="#ededed" text-anchor="middle" textLength="58.79" lengthAdjust="spacingAndGlyphs" >0.329</text>
<rect x="379.40" y="1308.30" width="1070.00" height="24.40" fill="#696969" />
<rect x="381.4" y="1311.2" width="20.6" height="19.2" rx="4" fill="#8e8e8e"/>
<path d="M397.2,1313.4 V1328.2 L387.4,1320.8Z" fill="#3a3a3a"/>
<rect x="1427" y="1311.2" width="20.6" height="19.2" rx="4" fill="#8e8e8e"/>
<path d="M1432,1313.4 V1328.2 L1441.8,1320.8Z" fill="#3a3a3a"/>
<rect x="406" y="1310.8" width="293.6" height="20" rx="10" fill="#444444"/>
<rect x="1.0" y="1378.2" width="52.6" height="60.6" rx="3.5" fill="url(#gTile)"/>
<rect x="6.0" y="1382.9" width="42.2" height="36.1" rx="3.2" fill="#040404" stroke="#030303" stroke-width="0.8"/>
<text x="27.30" y="1435.00" font-size="11.20" fill="#2e2e2e" text-anchor="middle" font-weight="bold" textLength="5.98" lengthAdjust="spacingAndGlyphs" >0</text>
<rect x="55.5" y="1378.2" width="52.6" height="60.6" rx="3.5" fill="url(#gTile)"/>
<rect x="60.5" y="1382.9" width="42.2" height="36.1" rx="3.2" fill="#040404" stroke="#030303" stroke-width="0.8"/>
<text x="81.80" y="1435.00" font-size="11.20" fill="#2e2e2e" text-anchor="middle" font-weight="bold" textLength="5.98" lengthAdjust="spacingAndGlyphs" >1</text>
<rect x="110.0" y="1378.2" width="52.6" height="60.6" rx="3.5" fill="url(#gTile)"/>
<rect x="115.0" y="1382.9" width="42.2" height="36.1" rx="3.2" fill="#040404" stroke="#030303" stroke-width="0.8"/>
<text x="136.30" y="1435.00" font-size="11.20" fill="#2e2e2e" text-anchor="middle" font-weight="bold" textLength="14.95" lengthAdjust="spacingAndGlyphs" >1.6</text>
<rect x="164.5" y="1378.2" width="52.6" height="60.6" rx="3.5" fill="url(#gTile)"/>
<rect x="169.5" y="1382.9" width="42.2" height="36.1" rx="3.2" fill="#050505" stroke="#040404" stroke-width="0.8"/>
<text x="190.80" y="1435.00" font-size="11.20" fill="#2e2e2e" text-anchor="middle" font-weight="bold" textLength="5.98" lengthAdjust="spacingAndGlyphs" >2</text>
<rect x="219.0" y="1378.2" width="52.6" height="60.6" rx="3.5" fill="url(#gTile)"/>
<rect x="224.0" y="1382.9" width="42.2" height="36.1" rx="3.2" fill="#060606" stroke="#050505" stroke-width="0.8"/>
<text x="245.30" y="1435.00" font-size="11.20" fill="#2e2e2e" text-anchor="middle" font-weight="bold" textLength="14.95" lengthAdjust="spacingAndGlyphs" >2.4</text>
<rect x="273.5" y="1378.2" width="52.6" height="60.6" rx="3.5" fill="url(#gTile)"/>
<rect x="278.5" y="1382.9" width="42.2" height="36.1" rx="3.2" fill="#080808" stroke="#060606" stroke-width="0.8"/>
<text x="299.80" y="1435.00" font-size="11.20" fill="#2e2e2e" text-anchor="middle" font-weight="bold" textLength="5.98" lengthAdjust="spacingAndGlyphs" >3</text>
<rect x="328.0" y="1378.2" width="52.6" height="60.6" rx="3.5" fill="url(#gTile)"/>
<rect x="333.0" y="1382.9" width="42.2" height="36.1" rx="3.2" fill="#0a0a0a" stroke="#080808" stroke-width="0.8"/>
<text x="354.30" y="1435.00" font-size="11.20" fill="#2e2e2e" text-anchor="middle" font-weight="bold" textLength="5.98" lengthAdjust="spacingAndGlyphs" >4</text>
<rect x="382.5" y="1378.2" width="52.6" height="60.6" rx="3.5" fill="url(#gTile)"/>
<rect x="387.5" y="1382.9" width="42.2" height="36.1" rx="3.2" fill="#0d0d0d" stroke="#0a0a0a" stroke-width="0.8"/>
<text x="408.80" y="1435.00" font-size="11.20" fill="#2e2e2e" text-anchor="middle" font-weight="bold" textLength="5.98" lengthAdjust="spacingAndGlyphs" >5</text>
<rect x="437.0" y="1378.2" width="52.6" height="60.6" rx="3.5" fill="url(#gTile)"/>
<rect x="442.0" y="1382.9" width="42.2" height="36.1" rx="3.2" fill="#0f0f0f" stroke="#0c0c0c" stroke-width="0.8"/>
<text x="463.30" y="1435.00" font-size="11.20" fill="#2e2e2e" text-anchor="middle" font-weight="bold" textLength="5.98" lengthAdjust="spacingAndGlyphs" >6</text>
<rect x="491.5" y="1378.2" width="52.6" height="60.6" rx="3.5" fill="url(#gTile)"/>
<rect x="496.5" y="1382.9" width="42.2" height="36.1" rx="3.2" fill="#131313" stroke="#0f0f0f" stroke-width="0.8"/>
<text x="517.80" y="1435.00" font-size="11.20" fill="#2e2e2e" text-anchor="middle" font-weight="bold" textLength="14.95" lengthAdjust="spacingAndGlyphs" >7.5</text>
<rect x="546.0" y="1378.2" width="52.6" height="60.6" rx="3.5" fill="url(#gTile)"/>
<rect x="551.0" y="1382.9" width="42.2" height="36.1" rx="3.2" fill="#141414" stroke="#101010" stroke-width="0.8"/>
<text x="572.30" y="1435.00" font-size="11.20" fill="#2e2e2e" text-anchor="middle" font-weight="bold" textLength="5.98" lengthAdjust="spacingAndGlyphs" >8</text>
<rect x="600.5" y="1378.2" width="52.6" height="60.6" rx="3.5" fill="url(#gTile)"/>
<rect x="605.5" y="1382.9" width="42.2" height="36.1" rx="3.2" fill="#171717" stroke="#121212" stroke-width="0.8"/>
<text x="626.80" y="1435.00" font-size="11.20" fill="#2e2e2e" text-anchor="middle" font-weight="bold" textLength="5.98" lengthAdjust="spacingAndGlyphs" >9</text>
<rect x="655.0" y="1378.2" width="52.6" height="60.6" rx="3.5" fill="url(#gTile)"/>
<rect x="660.0" y="1382.9" width="42.2" height="36.1" rx="3.2" fill="#1a1a1a" stroke="#141414" stroke-width="0.8"/>
<text x="681.30" y="1435.00" font-size="11.20" fill="#2e2e2e" text-anchor="middle" font-weight="bold" textLength="11.96" lengthAdjust="spacingAndGlyphs" >10</text>
<rect x="709.5" y="1378.2" width="52.6" height="60.6" rx="3.5" fill="url(#gTile)"/>
<rect x="714.5" y="1382.9" width="42.2" height="36.1" rx="3.2" fill="#202020" stroke="#1a1a1a" stroke-width="0.8"/>
<text x="735.80" y="1435.00" font-size="11.20" fill="#2e2e2e" text-anchor="middle" font-weight="bold" textLength="20.93" lengthAdjust="spacingAndGlyphs" >12.5</text>
<rect x="764.0" y="1378.2" width="52.6" height="60.6" rx="3.5" fill="url(#gTile)"/>
<rect x="769.0" y="1382.9" width="42.2" height="36.1" rx="3.2" fill="#262626" stroke="#1f1f1f" stroke-width="0.8"/>
<text x="790.30" y="1435.00" font-size="11.20" fill="#2e2e2e" text-anchor="middle" font-weight="bold" textLength="11.96" lengthAdjust="spacingAndGlyphs" >15</text>
<rect x="818.5" y="1378.2" width="52.6" height="60.6" rx="3.5" fill="url(#gTile)"/>
<rect x="823.5" y="1382.9" width="42.2" height="36.1" rx="3.2" fill="#2d2d2d" stroke="#242424" stroke-width="0.8"/>
<text x="844.80" y="1435.00" font-size="11.20" fill="#2e2e2e" text-anchor="middle" font-weight="bold" textLength="20.93" lengthAdjust="spacingAndGlyphs" >17.6</text>
<rect x="873.0" y="1378.2" width="52.6" height="60.6" rx="3.5" fill="url(#gTile)"/>
<rect x="878.0" y="1382.9" width="42.2" height="36.1" rx="3.2" fill="#333333" stroke="#292929" stroke-width="0.8"/>
<text x="899.30" y="1435.00" font-size="11.20" fill="#2e2e2e" text-anchor="middle" font-weight="bold" textLength="11.96" lengthAdjust="spacingAndGlyphs" >20</text>
<rect x="927.5" y="1378.2" width="52.6" height="60.6" rx="3.5" fill="url(#gTile)"/>
<rect x="932.5" y="1382.9" width="42.2" height="36.1" rx="3.2" fill="#393939" stroke="#2e2e2e" stroke-width="0.8"/>
<text x="953.80" y="1435.00" font-size="11.20" fill="#2e2e2e" text-anchor="middle" font-weight="bold" textLength="20.93" lengthAdjust="spacingAndGlyphs" >22.4</text>
<rect x="982.0" y="1378.2" width="52.6" height="60.6" rx="3.5" fill="url(#gTile)"/>
<rect x="987.0" y="1382.9" width="42.2" height="36.1" rx="3.2" fill="#404040" stroke="#333333" stroke-width="0.8"/>
<text x="1008.30" y="1435.00" font-size="11.20" fill="#2e2e2e" text-anchor="middle" font-weight="bold" textLength="11.96" lengthAdjust="spacingAndGlyphs" >25</text>
<rect x="1036.5" y="1378.2" width="52.6" height="60.6" rx="3.5" fill="url(#gTile)"/>
<rect x="1041.5" y="1382.9" width="42.2" height="36.1" rx="3.2" fill="#464646" stroke="#383838" stroke-width="0.8"/>
<text x="1062.80" y="1435.00" font-size="11.20" fill="#2e2e2e" text-anchor="middle" font-weight="bold" textLength="20.93" lengthAdjust="spacingAndGlyphs" >27.5</text>
<rect x="1091.0" y="1378.2" width="52.6" height="60.6" rx="3.5" fill="url(#gTile)"/>
<rect x="1096.0" y="1382.9" width="42.2" height="36.1" rx="3.2" fill="#4c4c4c" stroke="#3d3d3d" stroke-width="0.8"/>
<text x="1117.30" y="1435.00" font-size="11.20" fill="#2e2e2e" text-anchor="middle" font-weight="bold" textLength="11.96" lengthAdjust="spacingAndGlyphs" >30</text>
<rect x="1145.5" y="1378.2" width="52.6" height="60.6" rx="3.5" fill="url(#gTile)"/>
<rect x="1150.5" y="1382.9" width="42.2" height="36.1" rx="3.2" fill="#535353" stroke="#424242" stroke-width="0.8"/>
<text x="1171.80" y="1435.00" font-size="11.20" fill="#2e2e2e" text-anchor="middle" font-weight="bold" textLength="20.93" lengthAdjust="spacingAndGlyphs" >32.5</text>
<rect x="1200.0" y="1378.2" width="52.6" height="60.6" rx="3.5" fill="url(#gTile)"/>
<rect x="1205.0" y="1382.9" width="42.2" height="36.1" rx="3.2" fill="#595959" stroke="#474747" stroke-width="0.8"/>
<text x="1226.30" y="1435.00" font-size="11.20" fill="#2e2e2e" text-anchor="middle" font-weight="bold" textLength="11.96" lengthAdjust="spacingAndGlyphs" >35</text>
<rect x="1254.5" y="1378.2" width="52.6" height="60.6" rx="3.5" fill="url(#gTile)"/>
<rect x="1259.5" y="1382.9" width="42.2" height="36.1" rx="3.2" fill="#606060" stroke="#4d4d4d" stroke-width="0.8"/>
<text x="1280.80" y="1435.00" font-size="11.20" fill="#2e2e2e" text-anchor="middle" font-weight="bold" textLength="20.93" lengthAdjust="spacingAndGlyphs" >37.6</text>
<rect x="1309.0" y="1378.2" width="52.6" height="60.6" rx="3.5" fill="url(#gTile)"/>
<rect x="1314.0" y="1382.9" width="42.2" height="36.1" rx="3.2" fill="#666666" stroke="#525252" stroke-width="0.8"/>
<text x="1335.30" y="1435.00" font-size="11.20" fill="#2e2e2e" text-anchor="middle" font-weight="bold" textLength="11.96" lengthAdjust="spacingAndGlyphs" >40</text>
<rect x="1363.5" y="1378.2" width="52.6" height="60.6" rx="3.5" fill="url(#gTile)"/>
<rect x="1368.5" y="1382.9" width="42.2" height="36.1" rx="3.2" fill="#6c6c6c" stroke="#565656" stroke-width="0.8"/>
<text x="1389.80" y="1435.00" font-size="11.20" fill="#2e2e2e" text-anchor="middle" font-weight="bold" textLength="20.93" lengthAdjust="spacingAndGlyphs" >42.4</text>
<rect x="1418.0" y="1378.2" width="52.6" height="60.6" rx="3.5" fill="url(#gTile)"/>
<rect x="1423.0" y="1382.9" width="42.2" height="36.1" rx="3.2" fill="#737373" stroke="#5c5c5c" stroke-width="0.8"/>
<text x="1444.30" y="1435.00" font-size="11.20" fill="#2e2e2e" text-anchor="middle" font-weight="bold" textLength="11.96" lengthAdjust="spacingAndGlyphs" >45</text>
<rect x="1472.5" y="1378.2" width="52.6" height="60.6" rx="3.5" fill="url(#gTile)"/>
<rect x="1477.5" y="1382.9" width="42.2" height="36.1" rx="3.2" fill="#797979" stroke="#616161" stroke-width="0.8"/>
<text x="1498.80" y="1435.00" font-size="11.20" fill="#2e2e2e" text-anchor="middle" font-weight="bold" textLength="20.93" lengthAdjust="spacingAndGlyphs" >47.5</text>
<rect x="1527.0" y="1378.2" width="52.6" height="60.6" rx="3.5" fill="url(#gTile)"/>
<rect x="1532.0" y="1382.9" width="42.2" height="36.1" rx="3.2" fill="#808080" stroke="#666666" stroke-width="0.8"/>
<text x="1553.30" y="1435.00" font-size="11.20" fill="#2e2e2e" text-anchor="middle" font-weight="bold" textLength="11.96" lengthAdjust="spacingAndGlyphs" >50</text>
<rect x="1581.5" y="1378.2" width="52.6" height="60.6" rx="3.5" fill="url(#gTile)"/>
<rect x="1586.5" y="1382.9" width="42.2" height="36.1" rx="3.2" fill="#868686" stroke="#6b6b6b" stroke-width="0.8"/>
<text x="1607.80" y="1435.00" font-size="11.20" fill="#2e2e2e" text-anchor="middle" font-weight="bold" textLength="20.93" lengthAdjust="spacingAndGlyphs" >52.5</text>
<rect x="1636.0" y="1378.2" width="52.6" height="60.6" rx="3.5" fill="url(#gTile)"/>
<rect x="1641.0" y="1382.9" width="42.2" height="36.1" rx="3.2" fill="#8c8c8c" stroke="#707070" stroke-width="0.8"/>
<text x="1662.30" y="1435.00" font-size="11.20" fill="#2e2e2e" text-anchor="middle" font-weight="bold" textLength="11.96" lengthAdjust="spacingAndGlyphs" >55</text>
<rect x="1690.5" y="1378.2" width="52.6" height="60.6" rx="3.5" fill="url(#gTile)"/>
<rect x="1695.5" y="1382.9" width="42.2" height="36.1" rx="3.2" fill="#939393" stroke="#767676" stroke-width="0.8"/>
<text x="1716.80" y="1435.00" font-size="11.20" fill="#2e2e2e" text-anchor="middle" font-weight="bold" textLength="20.93" lengthAdjust="spacingAndGlyphs" >57.6</text>
<rect x="1745.0" y="1378.2" width="52.6" height="60.6" rx="3.5" fill="url(#gTile)"/>
<rect x="1750.0" y="1382.9" width="42.2" height="36.1" rx="3.2" fill="#999999" stroke="#7a7a7a" stroke-width="0.8"/>
<text x="1771.30" y="1435.00" font-size="11.20" fill="#2e2e2e" text-anchor="middle" font-weight="bold" textLength="11.96" lengthAdjust="spacingAndGlyphs" >60</text>
<rect x="1799.5" y="1378.2" width="52.6" height="60.6" rx="3.5" fill="url(#gTile)"/>
<rect x="1804.5" y="1382.9" width="42.2" height="36.1" rx="3.2" fill="#a6a6a6" stroke="#858585" stroke-width="0.8"/>
<text x="1825.80" y="1435.00" font-size="11.20" fill="#2e2e2e" text-anchor="middle" font-weight="bold" textLength="11.96" lengthAdjust="spacingAndGlyphs" >65</text>
<rect x="1854.0" y="1378.2" width="52.6" height="60.6" rx="3.5" fill="url(#gTile)"/>
<rect x="1859.0" y="1382.9" width="42.2" height="36.1" rx="3.2" fill="#b2b2b2" stroke="#8f8f8f" stroke-width="0.8"/>
<text x="1880.30" y="1435.00" font-size="11.20" fill="#2e2e2e" text-anchor="middle" font-weight="bold" textLength="11.96" lengthAdjust="spacingAndGlyphs" >70</text>
<rect x="1908.5" y="1378.2" width="52.6" height="60.6" rx="3.5" fill="url(#gTile)"/>
<rect x="1913.5" y="1382.9" width="42.2" height="36.1" rx="3.2" fill="#bfbfbf" stroke="#999999" stroke-width="0.8"/>
<text x="1934.80" y="1435.00" font-size="11.20" fill="#2e2e2e" text-anchor="middle" font-weight="bold" textLength="11.96" lengthAdjust="spacingAndGlyphs" >75</text>
<rect x="1963.0" y="1378.2" width="52.6" height="60.6" rx="3.5" fill="url(#gTile)"/>
<rect x="1968.0" y="1382.9" width="42.2" height="36.1" rx="3.2" fill="#cccccc" stroke="#a3a3a3" stroke-width="0.8"/>
<text x="1989.30" y="1435.00" font-size="11.20" fill="#2e2e2e" text-anchor="middle" font-weight="bold" textLength="11.96" lengthAdjust="spacingAndGlyphs" >80</text>
<rect x="2017.5" y="1378.2" width="52.6" height="60.6" rx="3.5" fill="url(#gTile)"/>
<rect x="2022.5" y="1382.9" width="42.2" height="36.1" rx="3.2" fill="#d9d9d9" stroke="#adadad" stroke-width="0.8"/>
<text x="2043.80" y="1435.00" font-size="11.20" fill="#2e2e2e" text-anchor="middle" font-weight="bold" textLength="11.96" lengthAdjust="spacingAndGlyphs" >85</text>
<rect x="2072.0" y="1378.2" width="52.6" height="60.6" rx="3.5" fill="url(#gTile)"/>
<rect x="2077.0" y="1382.9" width="42.2" height="36.1" rx="3.2" fill="#e6e6e6" stroke="#b8b8b8" stroke-width="0.8"/>
<text x="2098.30" y="1435.00" font-size="11.20" fill="#2e2e2e" text-anchor="middle" font-weight="bold" textLength="11.96" lengthAdjust="spacingAndGlyphs" >90</text>
<rect x="2126.5" y="1378.2" width="52.6" height="60.6" rx="3.5" fill="url(#gTile)"/>
<rect x="2131.5" y="1382.9" width="42.2" height="36.1" rx="3.2" fill="#f2f2f2" stroke="#c2c2c2" stroke-width="0.8"/>
<text x="2152.80" y="1435.00" font-size="11.20" fill="#2e2e2e" text-anchor="middle" font-weight="bold" textLength="11.96" lengthAdjust="spacingAndGlyphs" >95</text>
<rect x="2181.0" y="1378.2" width="52.6" height="60.6" rx="3.5" fill="url(#gTileS)"/>
<rect x="2186.0" y="1382.9" width="42.2" height="36.1" rx="3.2" fill="#ffffff" stroke="#ddd" stroke-width="0.8"/>
<text x="2207.30" y="1435.00" font-size="11.20" fill="#ffffff" text-anchor="middle" font-weight="bold" textLength="17.94" lengthAdjust="spacingAndGlyphs" >100</text>
<path d="M2237.2,1396 V1381.4 Q2237.2,1378 2240.6,1378 H2281.6 Q2285,1378 2285,1381.4 V1396Z" fill="url(#gCt)"/>
<circle cx="2261" cy="1387" r="7.4" fill="url(#gCtC)"/>
<path d="M2256.4,1388.8 H2265.6 L2261,1383.8Z" fill="#2a2a2a"/>
<path d="M2237.2,1397 H2285 V1435 Q2285,1438.6 2281.4,1438.6 H2240.8 Q2237.2,1438.6 2237.2,1435Z" fill="url(#gCt)"/>
<rect x="2246" y="1402.8" width="30.2" height="29.8" rx="4" fill="#131313" stroke="#3a3a3a" stroke-width="1.8"/>
<rect x="2248.00" y="1404.80" width="26.20" height="13.20" fill="#303030" />
<rect x="2286.4" y="1378" width="45.5" height="29.4" fill="url(#gCt)"/>
<circle cx="2309.3" cy="1393" r="10" fill="url(#gCtC)"/>
<rect x="2332.8" y="1378" width="43.7" height="29.4" fill="url(#gCt)"/>
<circle cx="2354.8" cy="1393" r="10" fill="url(#gCtC)"/>
<rect x="2377.4" y="1378" width="44.3" height="29.4" fill="url(#gCt)"/>
<circle cx="2399.7" cy="1393" r="10" fill="url(#gCtC)"/>
<rect x="2422.6" y="1378" width="43.7" height="29.4" fill="url(#gCt)"/>
<circle cx="2444.6" cy="1393" r="10" fill="url(#gCtC)"/>
<rect x="2467.2" y="1378" width="44.3" height="29.4" fill="#3e3e3e"/>
<circle cx="2489.5" cy="1393" r="10" fill="#363636"/>
<rect x="2512.4" y="1378" width="43.7" height="29.4" fill="url(#gCt)"/>
<circle cx="2534.4" cy="1393" r="10" fill="url(#gCtC)"/>
<rect x="2305.20" y="1388.90" width="8.20" height="8.20" fill="#2a2a2a" />
<path d="M2351.2,1388.4 V1397.6 L2359.8,1393Z" fill="#2a2a2a"/>
<path d="M2396.3,1388.2 H2394.1 V1397.8 H2396.3 M2403.1,1388.2 H2405.3 V1397.8 H2403.1" fill="none" stroke="#2a2a2a" stroke-width="1.7"/>
<rect x="2397.10" y="1392.20" width="1.70" height="1.70" fill="#2a2a2a" />
<rect x="2400.60" y="1392.20" width="1.70" height="1.70" fill="#2a2a2a" />
<path d="M2444.6,1393 c-1.6,-3.2 -5.8,-3.2 -5.8,0 c0,3.2 4.2,3.2 5.8,0 c1.6,-3.2 5.8,-3.2 5.8,0 c0,3.2 -4.2,3.2 -5.8,0Z" fill="none" stroke="#2a2a2a" stroke-width="1.7"/>
<path d="M2484.6,1392 a5,5 0 0 1 8.6,-2.6 M2494.4,1394 a5,5 0 0 1 -8.6,2.6" fill="none" stroke="#222" stroke-width="2.4"/>
<path d="M2494.7,1386.4 v4.4 h-4.4Z M2484.3,1399.6 v-4.4 h4.4Z" fill="#222"/>
<path d="M2286.4,1409 H2422 V1438.6 H2289.8 Q2286.4,1438.6 2286.4,1435.2Z" fill="url(#gCt)"/>
<path d="M2422.9,1409 H2556.8 V1435.2 Q2556.8,1438.6 2553.4,1438.6 H2422.9Z" fill="url(#gCt)"/>
<line x1="2286.40" y1="1409.50" x2="2422.00" y2="1409.50" stroke="#b0b0b0" stroke-width="1" />
<line x1="2422.90" y1="1409.50" x2="2556.80" y2="1409.50" stroke="#b0b0b0" stroke-width="1" />
<circle cx="2316" cy="1424.6" r="10" fill="url(#gCtC)"/>
<circle cx="2530" cy="1424.6" r="10" fill="url(#gCtC)"/>
<path d="M2315.4,1420 L2311,1424.6 L2315.4,1429.2 M2320,1420 L2315.6,1424.6 L2320,1429.2" fill="none" stroke="#2e2e2e" stroke-width="1.6"/>
<path d="M2526,1420 L2530.4,1424.6 L2526,1429.2 M2530.6,1420 L2535,1424.6 L2530.6,1429.2" fill="none" stroke="#2e2e2e" stroke-width="1.6"/>
<text x="2343.40" y="1432.80" font-size="24.60" fill="#2e2e2e" textLength="51.00" lengthAdjust="spacingAndGlyphs" stroke="#2e2e2e" stroke-width="0.8">Back</text>
<text x="2449.60" y="1432.80" font-size="24.60" fill="#2e2e2e" textLength="52.50" lengthAdjust="spacingAndGlyphs" stroke="#2e2e2e" stroke-width="0.8">Next</text>
<text x="207.60" y="510.40" font-size="22.00" fill="#e6e6e6" textLength="129.50" lengthAdjust="spacingAndGlyphs" >CIE 1976 u'v'</text>
<line x1="70.30" y1="848.30" x2="78.10" y2="848.30" stroke="#e2e2e2" stroke-width="2" />
<text x="69.90" y="857.00" font-size="23.00" fill="#e6e6e6" text-anchor="end" >0.45</text>
<line x1="70.30" y1="772.70" x2="78.10" y2="772.70" stroke="#e2e2e2" stroke-width="2" />
<text x="69.90" y="781.40" font-size="23.00" fill="#e6e6e6" text-anchor="end" >0.46</text>
<line x1="70.30" y1="697.10" x2="78.10" y2="697.10" stroke="#e2e2e2" stroke-width="2" />
<text x="69.90" y="705.80" font-size="23.00" fill="#e6e6e6" text-anchor="end" >0.47</text>
<line x1="70.30" y1="621.50" x2="78.10" y2="621.50" stroke="#e2e2e2" stroke-width="2" />
<text x="69.90" y="630.20" font-size="23.00" fill="#e6e6e6" text-anchor="end" >0.48</text>
<line x1="70.30" y1="545.90" x2="78.10" y2="545.90" stroke="#e2e2e2" stroke-width="2" />
<text x="69.90" y="554.60" font-size="23.00" fill="#e6e6e6" text-anchor="end" >0.49</text>
<line x1="141.60" y1="899.50" x2="141.60" y2="907.90" stroke="#e2e2e2" stroke-width="2.2" />
<text x="141.60" y="931.60" font-size="23.00" fill="#e6e6e6" text-anchor="middle" >0.18</text>
<line x1="228.80" y1="899.50" x2="228.80" y2="907.90" stroke="#e2e2e2" stroke-width="2.2" />
<text x="228.80" y="931.60" font-size="23.00" fill="#e6e6e6" text-anchor="middle" >0.19</text>
<line x1="316.00" y1="899.50" x2="316.00" y2="907.90" stroke="#e2e2e2" stroke-width="2.2" />
<text x="316.00" y="931.60" font-size="23.00" fill="#e6e6e6" text-anchor="middle" >0.2</text>
<line x1="403.20" y1="899.50" x2="403.20" y2="907.90" stroke="#e2e2e2" stroke-width="2.2" />
<text x="403.20" y="931.60" font-size="23.00" fill="#e6e6e6" text-anchor="middle" >0.21</text>
<line x1="490.40" y1="899.50" x2="490.40" y2="907.90" stroke="#e2e2e2" stroke-width="2.2" />
<text x="490.40" y="931.60" font-size="23.00" fill="#e6e6e6" text-anchor="middle" >0.22</text>
</svg>
<div style="position:absolute;left:79.3px;top:517.7px;width:439.0px;height:380.6px;background:radial-gradient(ellipse 56% 57% at 49.3% 50.8%, rgba(255,255,255,1) 0%, rgba(255,255,255,0.93) 8%, rgba(255,255,255,0.75) 25%, rgba(255,255,255,0.5) 50%, rgba(255,255,255,0.25) 75%, rgba(255,255,255,0) 100%),conic-gradient(from 0deg at 49.3% 50.8%, #f8ff9c 0deg, #ffff98 6deg, #ffd890 31deg, #ffb07c 49deg, #ffa09c 80deg, #ff9cc0 105deg, #ff94e8 130deg, #eea4ff 151deg, #c4b0ff 179deg, #92b2ff 207deg, #74c6ff 229deg, #7cffff 263deg, #84ffc8 289deg, #92ff9a 312deg, #beff9c 334deg, #f8ff9c 360deg);"></div>
<svg width="2560" height="1440" viewBox="0 0 2560 1440">
<rect x="79.3" y="517.7" width="439.0" height="380.6" fill="none" stroke="#9a9a9a" stroke-width="2.2"/>
<rect x="286.6" y="696" width="20.4" height="20.6" fill="#fff" stroke="#000" stroke-width="2.6"/>
<circle cx="410.0" cy="666.5" r="6.7" fill="#000000" stroke="#000" stroke-width="1.9"/>
<circle cx="301.3" cy="865.7" r="6.7" fill="#060606" stroke="#000" stroke-width="1.9"/>
<circle cx="336.7" cy="867.3" r="6.7" fill="#080808" stroke="#000" stroke-width="1.9"/>
<circle cx="318.0" cy="827.3" r="6.7" fill="#0e0e0e" stroke="#000" stroke-width="1.9"/>
<circle cx="343.0" cy="817.7" r="6.7" fill="#121212" stroke="#000" stroke-width="1.9"/>
<circle cx="336.7" cy="788.0" r="6.7" fill="#161616" stroke="#000" stroke-width="1.9"/>
<circle cx="343.0" cy="769.3" r="6.7" fill="#1a1a1a" stroke="#000" stroke-width="1.9"/>
<circle cx="349.3" cy="742.1" r="6.7" fill="#303030" stroke="#000" stroke-width="1.9"/>
<circle cx="338.8" cy="730.4" r="6.7" fill="#484848" stroke="#000" stroke-width="1.9"/>
<circle cx="326.0" cy="727.3" r="6.7" fill="#545454" stroke="#000" stroke-width="1.9"/>
<circle cx="331.2" cy="725.0" r="6.7" fill="#4c4c4c" stroke="#000" stroke-width="1.9"/>
<circle cx="347.9" cy="721.2" r="6.7" fill="#3e3e3e" stroke="#000" stroke-width="1.9"/>
<circle cx="338.8" cy="721.2" r="6.7" fill="#464646" stroke="#000" stroke-width="1.9"/>
<circle cx="347.5" cy="712.5" r="6.7" fill="#3a3a3a" stroke="#000" stroke-width="1.9"/>
<circle cx="332.5" cy="713.3" r="6.7" fill="#424242" stroke="#000" stroke-width="1.9"/>
<circle cx="321.8" cy="710.8" r="6.7" fill="#626262" stroke="#000" stroke-width="1.9"/>
<circle cx="312.1" cy="700.4" r="6.7" fill="#6a6a6a" stroke="#000" stroke-width="1.9"/>
<circle cx="306.7" cy="693.3" r="6.7" fill="#707070" stroke="#000" stroke-width="1.9"/>
<circle cx="303.8" cy="687.1" r="6.7" fill="#767676" stroke="#000" stroke-width="1.9"/>
<circle cx="303.3" cy="697.5" r="6.7" fill="#7c7c7c" stroke="#000" stroke-width="1.9"/>
<circle cx="299.6" cy="696.2" r="6.7" fill="#888888" stroke="#000" stroke-width="1.9"/>
<circle cx="286.2" cy="696.7" r="6.7" fill="#a0a0a0" stroke="#000" stroke-width="1.9"/>
<circle cx="289.2" cy="691.2" r="6.7" fill="#bababa" stroke="#000" stroke-width="1.9"/>
<circle cx="291.2" cy="682.4" r="6.7" fill="#787878" stroke="#000" stroke-width="1.9"/>
<circle cx="280.4" cy="688.8" r="6.7" fill="#ececec" stroke="#000" stroke-width="1.9"/>
<circle cx="292.7" cy="682.9" r="6.7" fill="#dadada" stroke="#000" stroke-width="1.9"/>
<circle cx="275.7" cy="681.2" r="6.7" fill="#fefefe" stroke="#000" stroke-width="1.9"/>
</svg>
</body></html>
